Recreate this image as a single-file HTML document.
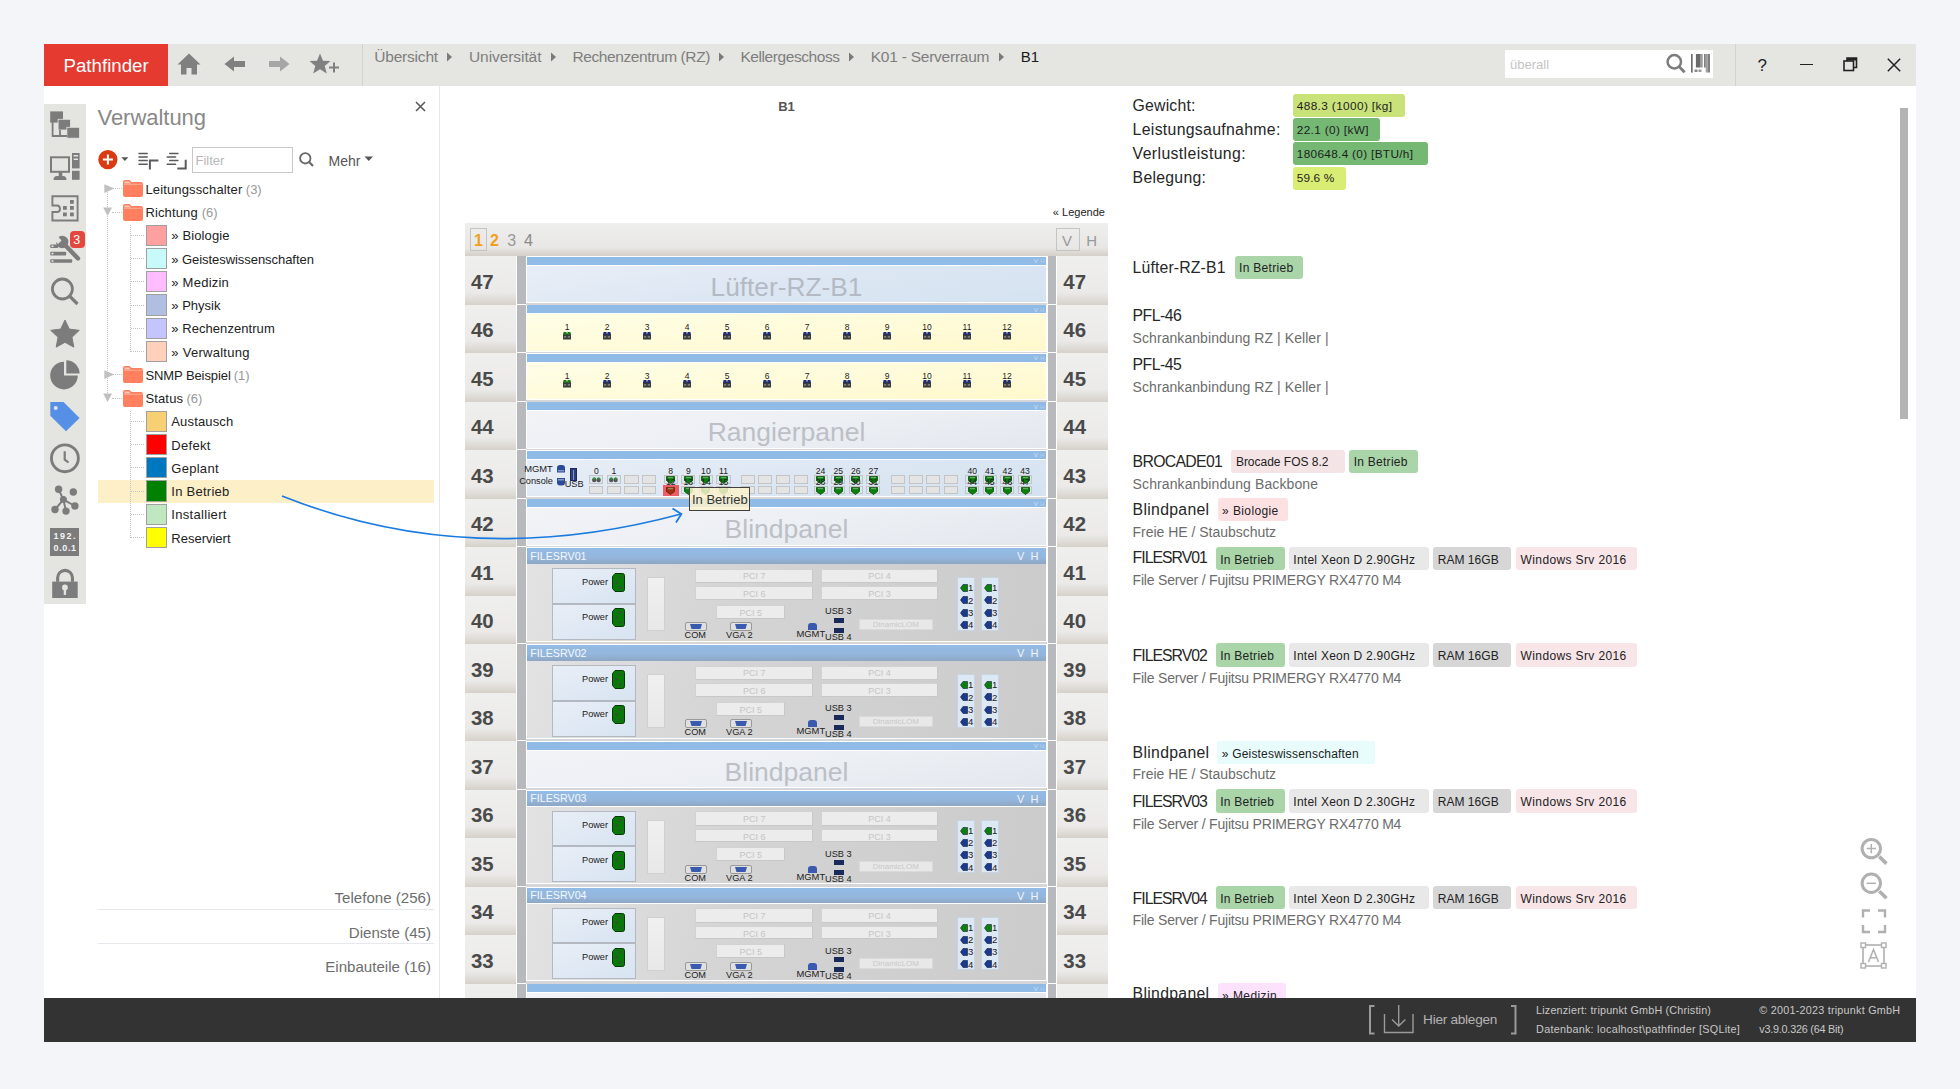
<!DOCTYPE html><html><head><meta charset="utf-8"><style>
*{box-sizing:border-box;margin:0;padding:0}
html,body{width:1960px;height:1089px;overflow:hidden;background:#f4f5f9;font-family:"Liberation Sans", sans-serif;position:relative}
.a{position:absolute}
.t{position:absolute;white-space:pre;line-height:1}
svg{position:absolute;overflow:visible}
</style></head><body>

<div class="a" style="left:44px;top:44px;width:1872px;height:42px;background:#e5e5e1"></div>
<div class="a" style="left:44px;top:86px;width:1872px;height:912px;background:#fff"></div>
<div class="a" style="left:44px;top:44px;width:124px;height:42px;background:#e43a30"></div>
<div class="t" style="left:63.50px;top:56.67px;font-size:18.7px;color:#fff;">Pathfinder</div>
<svg style="left:178px;top:53px" width="24" height="22" viewBox="0 0 24 22"><path d="M11 0.5 L22.5 11.5 L19 11.5 L19 21.5 L13.5 21.5 L13.5 15 L8.5 15 L8.5 21.5 L3 21.5 L3 11.5 L-0.5 11.5 Z" fill="#808080"/></svg>
<svg style="left:224px;top:56px" width="22" height="16" viewBox="0 0 22 16"><path d="M0.5 8 L10 0.5 L10 5 L21 5 L21 11 L10 11 L10 15.5 Z" fill="#808080"/></svg>
<svg style="left:268px;top:56px" width="22" height="16" viewBox="0 0 22 16"><path d="M21.5 8 L12 0.5 L12 5 L1 5 L1 11 L12 11 L12 15.5 Z" fill="#a6a6a6"/></svg>
<svg style="left:309px;top:53px" width="32" height="22" viewBox="0 0 32 22"><path d="M11 0.5 L14 7.8 L21.5 8 L15.7 13 L17.8 20.5 L11 16.2 L4.2 20.5 L6.3 13 L0.5 8 L8 7.8 Z" fill="#808080"/><path d="M20 14.5 H30 M25 9.5 V19.5" stroke="#808080" stroke-width="2"/></svg>
<div class="a" style="left:362px;top:44px;width:1px;height:42px;background:#d2d2ce"></div>
<div class="t" style="left:374.30px;top:49.18px;font-size:15.5px;color:#7e7e7e;letter-spacing:-0.208px;">Übersicht</div>
<svg style="left:447px;top:52px" width="6" height="10" viewBox="0 0 6 10"><path d="M0 0.5 L5 5 L0 9.5 Z" fill="#7a7a7a"/></svg>
<div class="t" style="left:469.00px;top:49.18px;font-size:15.5px;color:#7e7e7e;letter-spacing:-0.074px;">Universität</div>
<svg style="left:551px;top:52px" width="6" height="10" viewBox="0 0 6 10"><path d="M0 0.5 L5 5 L0 9.5 Z" fill="#7a7a7a"/></svg>
<div class="t" style="left:572.50px;top:49.18px;font-size:15.5px;color:#7e7e7e;letter-spacing:-0.401px;">Rechenzentrum (RZ)</div>
<svg style="left:719.4px;top:52px" width="6" height="10" viewBox="0 0 6 10"><path d="M0 0.5 L5 5 L0 9.5 Z" fill="#7a7a7a"/></svg>
<div class="t" style="left:740.40px;top:49.18px;font-size:15.5px;color:#7e7e7e;letter-spacing:-0.422px;">Kellergeschoss</div>
<svg style="left:849px;top:52px" width="6" height="10" viewBox="0 0 6 10"><path d="M0 0.5 L5 5 L0 9.5 Z" fill="#7a7a7a"/></svg>
<div class="t" style="left:870.70px;top:49.18px;font-size:15.5px;color:#7e7e7e;letter-spacing:-0.233px;">K01 - Serverraum</div>
<svg style="left:999px;top:52px" width="6" height="10" viewBox="0 0 6 10"><path d="M0 0.5 L5 5 L0 9.5 Z" fill="#7a7a7a"/></svg>
<div class="t" style="left:1020.70px;top:49.30px;font-size:15px;color:#1a1a1a;">B1</div>
<div class="a" style="left:1505px;top:50px;width:208px;height:28px;background:#fff"></div>
<div class="t" style="left:1510.00px;top:58.00px;font-size:13px;color:#c4c4c4;">überall</div>
<svg style="left:1666px;top:54px" width="22" height="22" viewBox="0 0 22 22"><circle cx="8.3" cy="7.75" r="6.7" fill="none" stroke="#7c7c7c" stroke-width="2.5"/><path d="M13 12.6 L18.6 18.3" stroke="#7c7c7c" stroke-width="2.8"/></svg>
<svg style="left:1690px;top:54px" width="22" height="20" viewBox="0 0 22 20"><rect x="1" y="0" width="1.7" height="18.6" fill="#707070"/><rect x="5.9" y="0" width="4.1" height="13.5" fill="#6a6a6a"/><rect x="10" y="0" width="2.7" height="13.5" fill="#9a9a9a"/><rect x="14.1" y="0" width="1.6" height="13.5" fill="#707070"/><rect x="15.7" y="0" width="1.8" height="18.5" fill="#a0a0a0"/><rect x="17.5" y="0" width="2.5" height="18.5" fill="#808080"/><rect x="4.5" y="15.5" width="3" height="2.5" fill="#888"/><rect x="8.5" y="15.5" width="3" height="2.5" fill="#999"/></svg>
<div class="a" style="left:1735px;top:44px;width:1px;height:42px;background:#d2d2ce"></div>
<div class="t" style="left:1757.50px;top:56.61px;font-size:17px;color:#222;">?</div>
<div class="a" style="left:1800px;top:63.5px;width:13px;height:1.6px;background:#222"></div>
<svg style="left:1843px;top:57px" width="15" height="15" viewBox="0 0 15 15"><rect x="1" y="4" width="9.5" height="9.5" fill="none" stroke="#222" stroke-width="1.6"/><path d="M4 4 V1 H13.5 V10.5 H10.5" fill="none" stroke="#222" stroke-width="1.6"/><rect x="4" y="1" width="9.5" height="2.5" fill="#222"/></svg>
<svg style="left:1887px;top:57.5px" width="14" height="14" viewBox="0 0 14 14"><path d="M0.8 0.8 L13.2 13.2 M13.2 0.8 L0.8 13.2" stroke="#222" stroke-width="1.5"/></svg>
<div class="a" style="left:44px;top:104px;width:42px;height:500px;background:#e4e4e0"></div>
<svg style="left:48px;top:109px" width="34" height="32" viewBox="0 0 34 32"><rect x="2.2" y="2.4" width="12.8" height="11.2" fill="#7c7c7c"/><rect x="10.1" y="10.3" width="12.4" height="10.7" fill="#7c7c7c" stroke="#e4e4e0" stroke-width="0.8"/><rect x="18.9" y="18.3" width="12.7" height="10.9" fill="#7c7c7c" stroke="#e4e4e0" stroke-width="0.8"/><path d="M4.6 13 V27 H19 M12 21 V27" fill="none" stroke="#7c7c7c" stroke-width="1.8"/></svg>
<svg style="left:48px;top:150px" width="34" height="32" viewBox="0 0 34 32"><rect x="3" y="7.3" width="18" height="14.5" fill="none" stroke="#7c7c7c" stroke-width="2"/><rect x="10.7" y="22" width="3.6" height="4" fill="#7c7c7c"/><path d="M5.5 30 Q5.5 26 9 26 H15 Q18.5 26 18.5 30 Z" fill="#7c7c7c"/><rect x="24" y="3" width="7.6" height="15.4" fill="#7c7c7c"/><rect x="24" y="20.8" width="7.6" height="9" fill="#7c7c7c"/><rect x="25.6" y="5" width="4.4" height="1.5" fill="#e4e4e0"/><rect x="25.6" y="8.5" width="4.4" height="1.5" fill="#e4e4e0"/></svg>
<svg style="left:48px;top:192px" width="34" height="32" viewBox="0 0 34 32"><path d="M4.4 4.3 H29.6 V28.5 H4.4 V20 H9 Q12 20 12 17 Q12 13.5 9 13.5 H4.4 Z" fill="none" stroke="#7c7c7c" stroke-width="1.9"/><rect x="22" y="8" width="3.8" height="3.8" fill="#7c7c7c"/><rect x="15" y="14" width="3.8" height="3.8" fill="#7c7c7c"/><rect x="22" y="14" width="3.8" height="3.8" fill="#7c7c7c"/><rect x="15" y="20.5" width="3.8" height="3.8" fill="#7c7c7c"/><rect x="22" y="20.5" width="3.8" height="3.8" fill="#7c7c7c"/></svg>
<svg style="left:48px;top:232px" width="40" height="34" viewBox="0 0 40 34"><rect x="2.2" y="12.5" width="8" height="3.6" rx="1" fill="#7c7c7c"/><rect x="2.2" y="19.8" width="16" height="3.6" rx="1" fill="#7c7c7c"/><rect x="2.2" y="27.2" width="22" height="3.6" rx="1" fill="#7c7c7c"/><rect x="3.5" y="13.5" width="2" height="1.6" fill="#e4e4e0"/><rect x="3.5" y="20.8" width="2" height="1.6" fill="#e4e4e0"/><rect x="3.5" y="28.2" width="2" height="1.6" fill="#e4e4e0"/><path d="M16 12 L30 26.5" stroke="#e4e4e0" stroke-width="7"/><path d="M16 12 L30 26.5" stroke="#7c7c7c" stroke-width="4.4" stroke-linecap="round"/><circle cx="14.2" cy="10" r="6.2" fill="#7c7c7c"/><path d="M8 2 L13.5 8.5 L10 12 L4 6 Z" fill="#e4e4e0"/></svg>
<div class="a" style="left:69.7px;top:231px;width:15.5px;height:16.8px;background:#e5473f;border-radius:4px"></div>
<div class="t" style="left:73.30px;top:233.92px;font-size:12.5px;color:#fff;">3</div>
<svg style="left:48px;top:273px" width="34" height="34" viewBox="0 0 34 34"><circle cx="14.4" cy="16" r="10" fill="none" stroke="#7c7c7c" stroke-width="2.8"/><path d="M21.5 23 L29.5 31" stroke="#7c7c7c" stroke-width="3.2" stroke-linecap="butt"/></svg>
<svg style="left:48px;top:318px" width="34" height="34" viewBox="0 0 34 34"><path d="M17.00 2.00 L21.29 11.09 L31.27 12.36 L23.94 19.26 L25.82 29.14 L17.00 24.30 L8.18 29.14 L10.06 19.26 L2.73 12.36 L12.71 11.09 Z" fill="#7c7c7c" stroke="#7c7c7c" stroke-width="1" stroke-linejoin="round"/></svg>
<svg style="left:48px;top:358px" width="34" height="34" viewBox="0 0 34 34"><path d="M16 3.8 A13.8 13.8 0 1 0 29.8 17.6 H16 Z" fill="#7c7c7c"/><path d="M18.3 2.2 A13.6 13.6 0 0 1 31.6 15.6 H18.3 Z" fill="#7c7c7c"/></svg>
<svg style="left:48px;top:400px" width="34" height="34" viewBox="0 0 34 34"><path d="M2.3 2.1 H15.5 L31.6 17.9 L18 31.3 L2.3 15.8 Z" fill="#5590e6"/><circle cx="7.7" cy="8" r="2" fill="#e4e4e0"/></svg>
<svg style="left:48px;top:441px" width="34" height="34" viewBox="0 0 34 34"><circle cx="16.9" cy="17.3" r="13.45" fill="none" stroke="#7c7c7c" stroke-width="2.9"/><path d="M16.7 10.2 V18.6 L20.5 21.5" fill="none" stroke="#7c7c7c" stroke-width="2.2"/></svg>
<svg style="left:48px;top:478px" width="34" height="38" viewBox="0 0 34 38"><path d="M15.4 21.6 L10.6 11.3 M15.4 21.6 L7 31.5 M15.4 21.6 L18 33.1 M15.4 21.6 L26.9 28" stroke="#7c7c7c" stroke-width="2"/><circle cx="15.4" cy="21.6" r="3.5" fill="#7c7c7c"/><circle cx="10.6" cy="11.3" r="3.7" fill="#7c7c7c"/><circle cx="25.3" cy="14" r="3.7" fill="#7c7c7c"/><circle cx="7" cy="31.5" r="3.7" fill="#7c7c7c"/><circle cx="18" cy="33.1" r="3.7" fill="#7c7c7c"/><circle cx="26.9" cy="28" r="3.7" fill="#7c7c7c"/></svg>
<div class="a" style="left:50.4px;top:527.6px;width:29.1px;height:28.7px;background:#7c7c7c"></div>
<div class="t" style="left:53.60px;top:532.28px;font-size:9px;color:#f4f4f4;letter-spacing:1.492px;font-weight:bold">192.</div>
<div class="t" style="left:53.60px;top:543.58px;font-size:9px;color:#f4f4f4;letter-spacing:0.594px;font-weight:bold">0.0.1</div>
<svg style="left:48px;top:565px" width="34" height="36" viewBox="0 0 34 36"><path d="M9.65 16.8 V12.75 A7.4 7.4 0 0 1 24.45 12.75 V16.8" fill="none" stroke="#7c7c7c" stroke-width="3.1"/><rect x="4.2" y="16.6" width="25.5" height="16.4" fill="#7c7c7c"/><circle cx="16.9" cy="22.5" r="2.9" fill="#e4e4e0"/><rect x="15.7" y="23" width="2.4" height="6.9" fill="#e4e4e0"/></svg>
<div class="a" style="left:439px;top:86px;width:1px;height:912px;background:#e6e6ec"></div>
<div class="t" style="left:97.50px;top:107.08px;font-size:22px;color:#888;letter-spacing:-0.036px;">Verwaltung</div>
<svg style="left:415px;top:101px" width="11" height="11" viewBox="0 0 11 11"><path d="M1 1 L10 10 M10 1 L1 10" stroke="#555" stroke-width="1.5"/></svg>
<svg style="left:97px;top:149px" width="34" height="22" viewBox="0 0 34 22"><circle cx="10.9" cy="10.6" r="9.6" fill="#d93a12"/><path d="M10.9 5.6 V15.6 M5.9 10.6 H15.9" stroke="#fff" stroke-width="2"/><path d="M24.4 8.2 H31.4 L27.9 12 Z" fill="#555"/></svg>
<svg style="left:137px;top:151px" width="24" height="20" viewBox="0 0 24 20"><path d="M2 2.4 H10.2 M2 6 H10.2 M2 9.5 H10.2 M2 13.2 H10.2" stroke="#5a5a5e" stroke-width="1.5" stroke-linecap="round"/><path d="M12.9 18.4 V9.6 H21.4" fill="none" stroke="#5a5a5e" stroke-width="2"/></svg>
<svg style="left:166px;top:151px" width="24" height="20" viewBox="0 0 24 20"><path d="M3.7 2.4 H11.9 M1.2 6 H9.6 M3.7 9.5 H11.9 M1.2 13.2 H9.6" stroke="#5a5a5e" stroke-width="1.5" stroke-linecap="round"/><path d="M11.3 17.4 H19.7 V8.8" fill="none" stroke="#5a5a5e" stroke-width="2"/></svg>
<div class="a" style="left:192px;top:147px;width:101px;height:26px;border:1px solid #c8c8c8;background:#fff"></div>
<div class="t" style="left:195.50px;top:154.00px;font-size:13px;color:#b8b8b8;">Filter</div>
<svg style="left:298px;top:151px" width="18" height="18" viewBox="0 0 18 18"><circle cx="7.3" cy="7.3" r="5.2" fill="none" stroke="#666" stroke-width="1.8"/><path d="M11 11 L15 15" stroke="#666" stroke-width="2.2"/></svg>
<div class="t" style="left:328.50px;top:154.15px;font-size:14px;color:#555;">Mehr</div>
<svg style="left:364px;top:155px" width="10" height="8" viewBox="0 0 10 8"><path d="M0.5 1.5 H9 L4.75 6 Z" fill="#555"/></svg>
<div class="a" style="left:98px;top:480px;width:336px;height:23px;background:#fdefc8"></div>
<div class="a" style="left:107px;top:189.8px;width:1px;height:209.25px;border-left:1px dotted #c4c4c4"></div>
<div class="a" style="left:130px;top:225.05px;width:1px;height:126.5px;border-left:1px dotted #c4c4c4"></div>
<div class="a" style="left:130px;top:411.05px;width:1px;height:126.49999999999994px;border-left:1px dotted #c4c4c4"></div>
<div class="a" style="left:112px;top:188.3px;width:10px;height:1px;border-top:1px dotted #c4c4c4"></div>
<svg style="left:103.5px;top:183.8px" width="11" height="10" viewBox="0 0 11 10"><path d="M0.3 0.3 L10.3 4.6 L0.3 8.9 Z" fill="#c0c0c0"/></svg>
<svg style="left:123px;top:180.4px" width="20" height="17" viewBox="0 0 20 17"><path d="M0 2 Q0 0 2 0 H6.5 L8.5 2 H18 Q20 2 20 4 V15 Q20 17 18 17 H2 Q0 17 0 15 Z" fill="#ff7f5f"/><path d="M1.6 1.5 H6.2 L7.6 3.4 H1.6 Z" fill="#ffc8b8"/><rect x="1" y="3.8" width="18" height="1" fill="#ffb09a"/></svg>
<div class="t" style="left:145.40px;top:182.80px;font-size:13px;color:#222;letter-spacing:0.146px;">Leitungsschalter</div>
<div class="t" style="left:245.80px;top:182.80px;font-size:13px;color:#999;">(3)</div>
<div class="a" style="left:112px;top:211.55px;width:10px;height:1px;border-top:1px dotted #c4c4c4"></div>
<svg style="left:103px;top:207.05px" width="10" height="10" viewBox="0 0 10 10"><path d="M0.2 0.5 H9 L4.6 9 Z" fill="#c0c0c0"/></svg>
<svg style="left:123px;top:203.65px" width="20" height="17" viewBox="0 0 20 17"><path d="M0 2 Q0 0 2 0 H6.5 L8.5 2 H18 Q20 2 20 4 V15 Q20 17 18 17 H2 Q0 17 0 15 Z" fill="#ff7f5f"/><path d="M1.6 1.5 H6.2 L7.6 3.4 H1.6 Z" fill="#ffc8b8"/><rect x="1" y="3.8" width="18" height="1" fill="#ffb09a"/></svg>
<div class="t" style="left:145.40px;top:206.05px;font-size:13px;color:#222;letter-spacing:0.136px;">Richtung</div>
<div class="t" style="left:201.70px;top:206.05px;font-size:13px;color:#999;">(6)</div>
<div class="a" style="left:131px;top:234.8px;width:13px;height:1px;border-top:1px dotted #c4c4c4"></div>
<div class="a" style="left:146px;top:224.5px;width:21px;height:21.4px;background:#ffa0a0;border:1px solid #a0a0a0"></div>
<div class="t" style="left:171.30px;top:229.30px;font-size:13px;color:#222;letter-spacing:0.129px;">» Biologie</div>
<div class="a" style="left:131px;top:258.05px;width:13px;height:1px;border-top:1px dotted #c4c4c4"></div>
<div class="a" style="left:146px;top:247.75px;width:21px;height:21.4px;background:#c8fafa;border:1px solid #a0a0a0"></div>
<div class="t" style="left:171.30px;top:252.55px;font-size:13px;color:#222;letter-spacing:-0.056px;">» Geisteswissenschaften</div>
<div class="a" style="left:131px;top:281.3px;width:13px;height:1px;border-top:1px dotted #c4c4c4"></div>
<div class="a" style="left:146px;top:271.0px;width:21px;height:21.4px;background:#ffbcff;border:1px solid #a0a0a0"></div>
<div class="t" style="left:171.30px;top:275.80px;font-size:13px;color:#222;letter-spacing:0.240px;">» Medizin</div>
<div class="a" style="left:131px;top:304.55px;width:13px;height:1px;border-top:1px dotted #c4c4c4"></div>
<div class="a" style="left:146px;top:294.25px;width:21px;height:21.4px;background:#b0bee0;border:1px solid #a0a0a0"></div>
<div class="t" style="left:171.30px;top:299.05px;font-size:13px;color:#222;letter-spacing:0.007px;">» Physik</div>
<div class="a" style="left:131px;top:327.8px;width:13px;height:1px;border-top:1px dotted #c4c4c4"></div>
<div class="a" style="left:146px;top:317.5px;width:21px;height:21.4px;background:#c4c4ff;border:1px solid #a0a0a0"></div>
<div class="t" style="left:171.30px;top:322.30px;font-size:13px;color:#222;letter-spacing:0.058px;">» Rechenzentrum</div>
<div class="a" style="left:131px;top:351.05px;width:13px;height:1px;border-top:1px dotted #c4c4c4"></div>
<div class="a" style="left:146px;top:340.75px;width:21px;height:21.4px;background:#ffd0bc;border:1px solid #a0a0a0"></div>
<div class="t" style="left:171.30px;top:345.55px;font-size:13px;color:#222;letter-spacing:0.269px;">» Verwaltung</div>
<div class="a" style="left:112px;top:374.3px;width:10px;height:1px;border-top:1px dotted #c4c4c4"></div>
<svg style="left:103.5px;top:369.8px" width="11" height="10" viewBox="0 0 11 10"><path d="M0.3 0.3 L10.3 4.6 L0.3 8.9 Z" fill="#c0c0c0"/></svg>
<svg style="left:123px;top:366.40000000000003px" width="20" height="17" viewBox="0 0 20 17"><path d="M0 2 Q0 0 2 0 H6.5 L8.5 2 H18 Q20 2 20 4 V15 Q20 17 18 17 H2 Q0 17 0 15 Z" fill="#ff7f5f"/><path d="M1.6 1.5 H6.2 L7.6 3.4 H1.6 Z" fill="#ffc8b8"/><rect x="1" y="3.8" width="18" height="1" fill="#ffb09a"/></svg>
<div class="t" style="left:145.40px;top:368.80px;font-size:13px;color:#222;letter-spacing:-0.090px;">SNMP Beispiel</div>
<div class="t" style="left:233.70px;top:368.80px;font-size:13px;color:#999;">(1)</div>
<div class="a" style="left:112px;top:397.55px;width:10px;height:1px;border-top:1px dotted #c4c4c4"></div>
<svg style="left:103px;top:393.05px" width="10" height="10" viewBox="0 0 10 10"><path d="M0.2 0.5 H9 L4.6 9 Z" fill="#c0c0c0"/></svg>
<svg style="left:123px;top:389.65000000000003px" width="20" height="17" viewBox="0 0 20 17"><path d="M0 2 Q0 0 2 0 H6.5 L8.5 2 H18 Q20 2 20 4 V15 Q20 17 18 17 H2 Q0 17 0 15 Z" fill="#ff7f5f"/><path d="M1.6 1.5 H6.2 L7.6 3.4 H1.6 Z" fill="#ffc8b8"/><rect x="1" y="3.8" width="18" height="1" fill="#ffb09a"/></svg>
<div class="t" style="left:145.40px;top:392.05px;font-size:13px;color:#222;letter-spacing:0.157px;">Status</div>
<div class="t" style="left:186.50px;top:392.05px;font-size:13px;color:#999;">(6)</div>
<div class="a" style="left:131px;top:420.8px;width:13px;height:1px;border-top:1px dotted #c4c4c4"></div>
<div class="a" style="left:146px;top:410.5px;width:21px;height:21.4px;background:#f8d074;border:1px solid #a0a0a0"></div>
<div class="t" style="left:171.30px;top:415.30px;font-size:13px;color:#222;letter-spacing:0.144px;">Austausch</div>
<div class="a" style="left:131px;top:444.05px;width:13px;height:1px;border-top:1px dotted #c4c4c4"></div>
<div class="a" style="left:146px;top:433.75px;width:21px;height:21.4px;background:#ff0000;border:1px solid #a0a0a0"></div>
<div class="t" style="left:171.30px;top:438.55px;font-size:13px;color:#222;letter-spacing:0.320px;">Defekt</div>
<div class="a" style="left:131px;top:467.3px;width:13px;height:1px;border-top:1px dotted #c4c4c4"></div>
<div class="a" style="left:146px;top:457.0px;width:21px;height:21.4px;background:#0078c0;border:1px solid #a0a0a0"></div>
<div class="t" style="left:171.30px;top:461.80px;font-size:13px;color:#222;letter-spacing:0.279px;">Geplant</div>
<div class="a" style="left:131px;top:490.55px;width:13px;height:1px;border-top:1px dotted #c4c4c4"></div>
<div class="a" style="left:146px;top:480.25px;width:21px;height:21.4px;background:#008000;border:1px solid #a0a0a0"></div>
<div class="t" style="left:171.30px;top:485.05px;font-size:13px;color:#222;letter-spacing:0.264px;">In Betrieb</div>
<div class="a" style="left:131px;top:513.8px;width:13px;height:1px;border-top:1px dotted #c4c4c4"></div>
<div class="a" style="left:146px;top:503.49999999999994px;width:21px;height:21.4px;background:#c0e8c0;border:1px solid #a0a0a0"></div>
<div class="t" style="left:171.30px;top:508.30px;font-size:13px;color:#222;letter-spacing:0.306px;">Installiert</div>
<div class="a" style="left:131px;top:537.05px;width:13px;height:1px;border-top:1px dotted #c4c4c4"></div>
<div class="a" style="left:146px;top:526.75px;width:21px;height:21.4px;background:#ffff00;border:1px solid #a0a0a0"></div>
<div class="t" style="left:171.30px;top:531.55px;font-size:13px;color:#222;letter-spacing:-0.005px;">Reserviert</div>
<div class="t" style="right:1529.00px;top:890.22px;font-size:15.1px;color:#6e6e6e;">Telefone (256)</div>
<div class="a" style="left:98px;top:908.5px;width:336px;height:1.5px;background:#e6e8ee"></div>
<div class="t" style="right:1529.00px;top:924.72px;font-size:15.1px;color:#6e6e6e;">Dienste (45)</div>
<div class="a" style="left:98px;top:942.5px;width:336px;height:1.5px;background:#e6e8ee"></div>
<div class="t" style="right:1529.00px;top:959.02px;font-size:15.1px;color:#6e6e6e;">Einbauteile (16)</div>
<div class="t" style="left:286.50px;width:1000px;text-align:center;top:100.00px;font-size:13px;color:#555;font-weight:bold">B1</div>
<div class="t" style="right:855.00px;top:207.49px;font-size:11px;color:#222;letter-spacing:0.022px;">« Legende</div>
<div class="a" style="left:465px;top:222.5px;width:643px;height:33.5px;background:linear-gradient(#eeeeed 0%,#e8e7e5 76%,#dfdcd7 86%,#d6d1ca 97%)"></div>
<div class="a" style="left:470.4px;top:228px;width:16.2px;height:22.7px;border:1px solid #c4c4c4"></div>
<div class="t" style="left:474.00px;top:232.76px;font-size:16px;color:#f0a01c;font-weight:bold">1</div>
<div class="t" style="left:490.00px;top:232.76px;font-size:16px;color:#f0a01c;font-weight:bold">2</div>
<div class="t" style="left:507.30px;top:232.76px;font-size:16px;color:#999;">3</div>
<div class="t" style="left:524.00px;top:232.76px;font-size:16px;color:#888;">4</div>
<div class="a" style="left:1056px;top:228px;width:23.6px;height:22.5px;border:1px solid #c4c4c4"></div>
<div class="t" style="left:1062.00px;top:233.30px;font-size:15px;color:#999;letter-spacing:0.284px;">V</div>
<div class="t" style="left:1086.30px;top:233.30px;font-size:15px;color:#999;letter-spacing:-0.744px;">H</div>
<div class="a" style="left:526px;top:256px;width:521px;height:742px;background:#d6d6d8"></div>
<div class="a" style="left:465px;top:256.0px;width:51px;height:48.5px;background:linear-gradient(#efefee 0%,#ebeae9 74%,#e0ddd8 88%,#d5d0c9 100%)"></div>
<div class="a" style="left:1057px;top:256.0px;width:51px;height:48.5px;background:linear-gradient(#efefee 0%,#ebeae9 74%,#e0ddd8 88%,#d5d0c9 100%)"></div>
<div class="t" style="left:471.00px;top:271.73px;font-size:20.4px;color:#4a4a4a;font-weight:bold">47</div>
<div class="t" style="left:1063.30px;top:271.73px;font-size:20.4px;color:#4a4a4a;font-weight:bold">47</div>
<div class="a" style="left:465px;top:304.5px;width:51px;height:48.5px;background:linear-gradient(#efefee 0%,#ebeae9 74%,#e0ddd8 88%,#d5d0c9 100%)"></div>
<div class="a" style="left:1057px;top:304.5px;width:51px;height:48.5px;background:linear-gradient(#efefee 0%,#ebeae9 74%,#e0ddd8 88%,#d5d0c9 100%)"></div>
<div class="t" style="left:471.00px;top:320.23px;font-size:20.4px;color:#4a4a4a;font-weight:bold">46</div>
<div class="t" style="left:1063.30px;top:320.23px;font-size:20.4px;color:#4a4a4a;font-weight:bold">46</div>
<div class="a" style="left:465px;top:353.0px;width:51px;height:48.5px;background:linear-gradient(#efefee 0%,#ebeae9 74%,#e0ddd8 88%,#d5d0c9 100%)"></div>
<div class="a" style="left:1057px;top:353.0px;width:51px;height:48.5px;background:linear-gradient(#efefee 0%,#ebeae9 74%,#e0ddd8 88%,#d5d0c9 100%)"></div>
<div class="t" style="left:471.00px;top:368.73px;font-size:20.4px;color:#4a4a4a;font-weight:bold">45</div>
<div class="t" style="left:1063.30px;top:368.73px;font-size:20.4px;color:#4a4a4a;font-weight:bold">45</div>
<div class="a" style="left:465px;top:401.5px;width:51px;height:48.5px;background:linear-gradient(#efefee 0%,#ebeae9 74%,#e0ddd8 88%,#d5d0c9 100%)"></div>
<div class="a" style="left:1057px;top:401.5px;width:51px;height:48.5px;background:linear-gradient(#efefee 0%,#ebeae9 74%,#e0ddd8 88%,#d5d0c9 100%)"></div>
<div class="t" style="left:471.00px;top:417.23px;font-size:20.4px;color:#4a4a4a;font-weight:bold">44</div>
<div class="t" style="left:1063.30px;top:417.23px;font-size:20.4px;color:#4a4a4a;font-weight:bold">44</div>
<div class="a" style="left:465px;top:450.0px;width:51px;height:48.5px;background:linear-gradient(#efefee 0%,#ebeae9 74%,#e0ddd8 88%,#d5d0c9 100%)"></div>
<div class="a" style="left:1057px;top:450.0px;width:51px;height:48.5px;background:linear-gradient(#efefee 0%,#ebeae9 74%,#e0ddd8 88%,#d5d0c9 100%)"></div>
<div class="t" style="left:471.00px;top:465.73px;font-size:20.4px;color:#4a4a4a;font-weight:bold">43</div>
<div class="t" style="left:1063.30px;top:465.73px;font-size:20.4px;color:#4a4a4a;font-weight:bold">43</div>
<div class="a" style="left:465px;top:498.5px;width:51px;height:48.5px;background:linear-gradient(#efefee 0%,#ebeae9 74%,#e0ddd8 88%,#d5d0c9 100%)"></div>
<div class="a" style="left:1057px;top:498.5px;width:51px;height:48.5px;background:linear-gradient(#efefee 0%,#ebeae9 74%,#e0ddd8 88%,#d5d0c9 100%)"></div>
<div class="t" style="left:471.00px;top:514.23px;font-size:20.4px;color:#4a4a4a;font-weight:bold">42</div>
<div class="t" style="left:1063.30px;top:514.23px;font-size:20.4px;color:#4a4a4a;font-weight:bold">42</div>
<div class="a" style="left:465px;top:547.0px;width:51px;height:48.5px;background:linear-gradient(#efefee 0%,#ebeae9 74%,#e0ddd8 88%,#d5d0c9 100%)"></div>
<div class="a" style="left:1057px;top:547.0px;width:51px;height:48.5px;background:linear-gradient(#efefee 0%,#ebeae9 74%,#e0ddd8 88%,#d5d0c9 100%)"></div>
<div class="t" style="left:471.00px;top:562.73px;font-size:20.4px;color:#4a4a4a;font-weight:bold">41</div>
<div class="t" style="left:1063.30px;top:562.73px;font-size:20.4px;color:#4a4a4a;font-weight:bold">41</div>
<div class="a" style="left:465px;top:595.5px;width:51px;height:48.5px;background:linear-gradient(#efefee 0%,#ebeae9 74%,#e0ddd8 88%,#d5d0c9 100%)"></div>
<div class="a" style="left:1057px;top:595.5px;width:51px;height:48.5px;background:linear-gradient(#efefee 0%,#ebeae9 74%,#e0ddd8 88%,#d5d0c9 100%)"></div>
<div class="t" style="left:471.00px;top:611.23px;font-size:20.4px;color:#4a4a4a;font-weight:bold">40</div>
<div class="t" style="left:1063.30px;top:611.23px;font-size:20.4px;color:#4a4a4a;font-weight:bold">40</div>
<div class="a" style="left:465px;top:644.0px;width:51px;height:48.5px;background:linear-gradient(#efefee 0%,#ebeae9 74%,#e0ddd8 88%,#d5d0c9 100%)"></div>
<div class="a" style="left:1057px;top:644.0px;width:51px;height:48.5px;background:linear-gradient(#efefee 0%,#ebeae9 74%,#e0ddd8 88%,#d5d0c9 100%)"></div>
<div class="t" style="left:471.00px;top:659.73px;font-size:20.4px;color:#4a4a4a;font-weight:bold">39</div>
<div class="t" style="left:1063.30px;top:659.73px;font-size:20.4px;color:#4a4a4a;font-weight:bold">39</div>
<div class="a" style="left:465px;top:692.5px;width:51px;height:48.5px;background:linear-gradient(#efefee 0%,#ebeae9 74%,#e0ddd8 88%,#d5d0c9 100%)"></div>
<div class="a" style="left:1057px;top:692.5px;width:51px;height:48.5px;background:linear-gradient(#efefee 0%,#ebeae9 74%,#e0ddd8 88%,#d5d0c9 100%)"></div>
<div class="t" style="left:471.00px;top:708.23px;font-size:20.4px;color:#4a4a4a;font-weight:bold">38</div>
<div class="t" style="left:1063.30px;top:708.23px;font-size:20.4px;color:#4a4a4a;font-weight:bold">38</div>
<div class="a" style="left:465px;top:741.0px;width:51px;height:48.5px;background:linear-gradient(#efefee 0%,#ebeae9 74%,#e0ddd8 88%,#d5d0c9 100%)"></div>
<div class="a" style="left:1057px;top:741.0px;width:51px;height:48.5px;background:linear-gradient(#efefee 0%,#ebeae9 74%,#e0ddd8 88%,#d5d0c9 100%)"></div>
<div class="t" style="left:471.00px;top:756.73px;font-size:20.4px;color:#4a4a4a;font-weight:bold">37</div>
<div class="t" style="left:1063.30px;top:756.73px;font-size:20.4px;color:#4a4a4a;font-weight:bold">37</div>
<div class="a" style="left:465px;top:789.5px;width:51px;height:48.5px;background:linear-gradient(#efefee 0%,#ebeae9 74%,#e0ddd8 88%,#d5d0c9 100%)"></div>
<div class="a" style="left:1057px;top:789.5px;width:51px;height:48.5px;background:linear-gradient(#efefee 0%,#ebeae9 74%,#e0ddd8 88%,#d5d0c9 100%)"></div>
<div class="t" style="left:471.00px;top:805.23px;font-size:20.4px;color:#4a4a4a;font-weight:bold">36</div>
<div class="t" style="left:1063.30px;top:805.23px;font-size:20.4px;color:#4a4a4a;font-weight:bold">36</div>
<div class="a" style="left:465px;top:838.0px;width:51px;height:48.5px;background:linear-gradient(#efefee 0%,#ebeae9 74%,#e0ddd8 88%,#d5d0c9 100%)"></div>
<div class="a" style="left:1057px;top:838.0px;width:51px;height:48.5px;background:linear-gradient(#efefee 0%,#ebeae9 74%,#e0ddd8 88%,#d5d0c9 100%)"></div>
<div class="t" style="left:471.00px;top:853.73px;font-size:20.4px;color:#4a4a4a;font-weight:bold">35</div>
<div class="t" style="left:1063.30px;top:853.73px;font-size:20.4px;color:#4a4a4a;font-weight:bold">35</div>
<div class="a" style="left:465px;top:886.5px;width:51px;height:48.5px;background:linear-gradient(#efefee 0%,#ebeae9 74%,#e0ddd8 88%,#d5d0c9 100%)"></div>
<div class="a" style="left:1057px;top:886.5px;width:51px;height:48.5px;background:linear-gradient(#efefee 0%,#ebeae9 74%,#e0ddd8 88%,#d5d0c9 100%)"></div>
<div class="t" style="left:471.00px;top:902.23px;font-size:20.4px;color:#4a4a4a;font-weight:bold">34</div>
<div class="t" style="left:1063.30px;top:902.23px;font-size:20.4px;color:#4a4a4a;font-weight:bold">34</div>
<div class="a" style="left:465px;top:935.0px;width:51px;height:48.5px;background:linear-gradient(#efefee 0%,#ebeae9 74%,#e0ddd8 88%,#d5d0c9 100%)"></div>
<div class="a" style="left:1057px;top:935.0px;width:51px;height:48.5px;background:linear-gradient(#efefee 0%,#ebeae9 74%,#e0ddd8 88%,#d5d0c9 100%)"></div>
<div class="t" style="left:471.00px;top:950.73px;font-size:20.4px;color:#4a4a4a;font-weight:bold">33</div>
<div class="t" style="left:1063.30px;top:950.73px;font-size:20.4px;color:#4a4a4a;font-weight:bold">33</div>
<div class="a" style="left:465px;top:983.5px;width:51px;height:48.5px;background:linear-gradient(#efefee 0%,#ebeae9 74%,#e0ddd8 88%,#d5d0c9 100%)"></div>
<div class="a" style="left:1057px;top:983.5px;width:51px;height:48.5px;background:linear-gradient(#efefee 0%,#ebeae9 74%,#e0ddd8 88%,#d5d0c9 100%)"></div>
<div class="t" style="left:471.00px;top:999.23px;font-size:20.4px;color:#4a4a4a;font-weight:bold">32</div>
<div class="t" style="left:1063.30px;top:999.23px;font-size:20.4px;color:#4a4a4a;font-weight:bold">32</div>
<div class="a" style="left:517px;top:256.0px;width:9px;height:47.5px;background:#b8b9bd"></div>
<div class="a" style="left:1048px;top:256.0px;width:8px;height:47.5px;background:#b8b9bd"></div>
<div class="a" style="left:517px;top:304.5px;width:9px;height:47.5px;background:#b8b9bd"></div>
<div class="a" style="left:1048px;top:304.5px;width:8px;height:47.5px;background:#b8b9bd"></div>
<div class="a" style="left:517px;top:353.0px;width:9px;height:47.5px;background:#b8b9bd"></div>
<div class="a" style="left:1048px;top:353.0px;width:8px;height:47.5px;background:#b8b9bd"></div>
<div class="a" style="left:517px;top:401.5px;width:9px;height:47.5px;background:#b8b9bd"></div>
<div class="a" style="left:1048px;top:401.5px;width:8px;height:47.5px;background:#b8b9bd"></div>
<div class="a" style="left:517px;top:450.0px;width:9px;height:47.5px;background:#b8b9bd"></div>
<div class="a" style="left:1048px;top:450.0px;width:8px;height:47.5px;background:#b8b9bd"></div>
<div class="a" style="left:517px;top:498.5px;width:9px;height:47.5px;background:#b8b9bd"></div>
<div class="a" style="left:1048px;top:498.5px;width:8px;height:47.5px;background:#b8b9bd"></div>
<div class="a" style="left:517px;top:547.0px;width:9px;height:96.0px;background:#b8b9bd"></div>
<div class="a" style="left:1048px;top:547.0px;width:8px;height:96.0px;background:#b8b9bd"></div>
<div class="a" style="left:517px;top:644.0px;width:9px;height:96.0px;background:#b8b9bd"></div>
<div class="a" style="left:1048px;top:644.0px;width:8px;height:96.0px;background:#b8b9bd"></div>
<div class="a" style="left:517px;top:741.0px;width:9px;height:47.5px;background:#b8b9bd"></div>
<div class="a" style="left:1048px;top:741.0px;width:8px;height:47.5px;background:#b8b9bd"></div>
<div class="a" style="left:517px;top:789.5px;width:9px;height:96.0px;background:#b8b9bd"></div>
<div class="a" style="left:1048px;top:789.5px;width:8px;height:96.0px;background:#b8b9bd"></div>
<div class="a" style="left:517px;top:886.5px;width:9px;height:96.0px;background:#b8b9bd"></div>
<div class="a" style="left:1048px;top:886.5px;width:8px;height:96.0px;background:#b8b9bd"></div>
<div class="a" style="left:517px;top:983.5px;width:9px;height:14.5px;background:#b8b9bd"></div>
<div class="a" style="left:1048px;top:983.5px;width:8px;height:14.5px;background:#b8b9bd"></div>
<div class="a" style="left:526px;top:256.0px;width:521px;height:47.0px;background:#fff"></div>
<div class="a" style="left:527px;top:256.5px;width:519px;height:8px;background:#91bbe7"></div>
<div class="a" style="left:527px;top:265.5px;width:519px;height:36.5px;background:linear-gradient(170deg,#e8eef7 0%,#dde7f3 50%,#d4e2f1 100%)"></div>
<div class="t" style="left:1034.00px;top:258.42px;font-size:6px;color:#d0e0f4;">V</div>
<div class="t" style="left:1040.00px;top:258.42px;font-size:6px;color:#b8cce6;">H</div>
<div class="t" style="left:286.50px;width:1000px;text-align:center;top:273.74px;font-size:26.3px;color:#b4bac4;">Lüfter-RZ-B1</div>
<div class="a" style="left:526px;top:304.5px;width:521px;height:47.0px;background:#fff"></div>
<div class="a" style="left:527px;top:305.0px;width:519px;height:8px;background:#91bbe7"></div>
<div class="a" style="left:527px;top:314.0px;width:519px;height:36.5px;background:linear-gradient(175deg,#fffee6 0%,#fffbd8 60%,#fff8cc 100%)"></div>
<div class="t" style="left:1034.00px;top:306.92px;font-size:6px;color:#d0e0f4;">V</div>
<div class="t" style="left:1040.00px;top:306.92px;font-size:6px;color:#b8cce6;">H</div>
<div class="t" style="left:67.00px;width:1000px;text-align:center;top:323.30px;font-size:8.5px;color:#222;">1</div>
<svg style="left:563px;top:331.7px" width="8" height="7.5" viewBox="0 0 8 7.5"><rect x="0" y="1.5" width="8" height="6" fill="#3a3a3a"/><rect x="0.5" y="0" width="3" height="3" fill="#1a7a1a"/><rect x="4.5" y="0" width="3" height="3" fill="#1a7a1a"/><rect x="1" y="4.2" width="2.2" height="1.4" fill="#8a8a8a"/><rect x="4.8" y="4.2" width="2.2" height="1.4" fill="#8a8a8a"/></svg>
<div class="t" style="left:107.00px;width:1000px;text-align:center;top:323.30px;font-size:8.5px;color:#222;">2</div>
<svg style="left:603px;top:331.7px" width="8" height="7.5" viewBox="0 0 8 7.5"><rect x="0" y="1.5" width="8" height="6" fill="#3a3a3a"/><rect x="0.5" y="0" width="3" height="3" fill="#1e2e78"/><rect x="4.5" y="0" width="3" height="3" fill="#1e2e78"/><rect x="1" y="4.2" width="2.2" height="1.4" fill="#8a8a8a"/><rect x="4.8" y="4.2" width="2.2" height="1.4" fill="#8a8a8a"/></svg>
<div class="t" style="left:147.00px;width:1000px;text-align:center;top:323.30px;font-size:8.5px;color:#222;">3</div>
<svg style="left:643px;top:331.7px" width="8" height="7.5" viewBox="0 0 8 7.5"><rect x="0" y="1.5" width="8" height="6" fill="#3a3a3a"/><rect x="0.5" y="0" width="3" height="3" fill="#1e2e78"/><rect x="4.5" y="0" width="3" height="3" fill="#1e2e78"/><rect x="1" y="4.2" width="2.2" height="1.4" fill="#8a8a8a"/><rect x="4.8" y="4.2" width="2.2" height="1.4" fill="#8a8a8a"/></svg>
<div class="t" style="left:187.00px;width:1000px;text-align:center;top:323.30px;font-size:8.5px;color:#222;">4</div>
<svg style="left:683px;top:331.7px" width="8" height="7.5" viewBox="0 0 8 7.5"><rect x="0" y="1.5" width="8" height="6" fill="#3a3a3a"/><rect x="0.5" y="0" width="3" height="3" fill="#1e2e78"/><rect x="4.5" y="0" width="3" height="3" fill="#1e2e78"/><rect x="1" y="4.2" width="2.2" height="1.4" fill="#8a8a8a"/><rect x="4.8" y="4.2" width="2.2" height="1.4" fill="#8a8a8a"/></svg>
<div class="t" style="left:227.00px;width:1000px;text-align:center;top:323.30px;font-size:8.5px;color:#222;">5</div>
<svg style="left:723px;top:331.7px" width="8" height="7.5" viewBox="0 0 8 7.5"><rect x="0" y="1.5" width="8" height="6" fill="#3a3a3a"/><rect x="0.5" y="0" width="3" height="3" fill="#1e2e78"/><rect x="4.5" y="0" width="3" height="3" fill="#1e2e78"/><rect x="1" y="4.2" width="2.2" height="1.4" fill="#8a8a8a"/><rect x="4.8" y="4.2" width="2.2" height="1.4" fill="#8a8a8a"/></svg>
<div class="t" style="left:267.00px;width:1000px;text-align:center;top:323.30px;font-size:8.5px;color:#222;">6</div>
<svg style="left:763px;top:331.7px" width="8" height="7.5" viewBox="0 0 8 7.5"><rect x="0" y="1.5" width="8" height="6" fill="#3a3a3a"/><rect x="0.5" y="0" width="3" height="3" fill="#1e2e78"/><rect x="4.5" y="0" width="3" height="3" fill="#1e2e78"/><rect x="1" y="4.2" width="2.2" height="1.4" fill="#8a8a8a"/><rect x="4.8" y="4.2" width="2.2" height="1.4" fill="#8a8a8a"/></svg>
<div class="t" style="left:307.00px;width:1000px;text-align:center;top:323.30px;font-size:8.5px;color:#222;">7</div>
<svg style="left:803px;top:331.7px" width="8" height="7.5" viewBox="0 0 8 7.5"><rect x="0" y="1.5" width="8" height="6" fill="#3a3a3a"/><rect x="0.5" y="0" width="3" height="3" fill="#1e2e78"/><rect x="4.5" y="0" width="3" height="3" fill="#1e2e78"/><rect x="1" y="4.2" width="2.2" height="1.4" fill="#8a8a8a"/><rect x="4.8" y="4.2" width="2.2" height="1.4" fill="#8a8a8a"/></svg>
<div class="t" style="left:347.00px;width:1000px;text-align:center;top:323.30px;font-size:8.5px;color:#222;">8</div>
<svg style="left:843px;top:331.7px" width="8" height="7.5" viewBox="0 0 8 7.5"><rect x="0" y="1.5" width="8" height="6" fill="#3a3a3a"/><rect x="0.5" y="0" width="3" height="3" fill="#1e2e78"/><rect x="4.5" y="0" width="3" height="3" fill="#1e2e78"/><rect x="1" y="4.2" width="2.2" height="1.4" fill="#8a8a8a"/><rect x="4.8" y="4.2" width="2.2" height="1.4" fill="#8a8a8a"/></svg>
<div class="t" style="left:387.00px;width:1000px;text-align:center;top:323.30px;font-size:8.5px;color:#222;">9</div>
<svg style="left:883px;top:331.7px" width="8" height="7.5" viewBox="0 0 8 7.5"><rect x="0" y="1.5" width="8" height="6" fill="#3a3a3a"/><rect x="0.5" y="0" width="3" height="3" fill="#1e2e78"/><rect x="4.5" y="0" width="3" height="3" fill="#1e2e78"/><rect x="1" y="4.2" width="2.2" height="1.4" fill="#8a8a8a"/><rect x="4.8" y="4.2" width="2.2" height="1.4" fill="#8a8a8a"/></svg>
<div class="t" style="left:427.00px;width:1000px;text-align:center;top:323.30px;font-size:8.5px;color:#222;">10</div>
<svg style="left:923px;top:331.7px" width="8" height="7.5" viewBox="0 0 8 7.5"><rect x="0" y="1.5" width="8" height="6" fill="#3a3a3a"/><rect x="0.5" y="0" width="3" height="3" fill="#1e2e78"/><rect x="4.5" y="0" width="3" height="3" fill="#1e2e78"/><rect x="1" y="4.2" width="2.2" height="1.4" fill="#8a8a8a"/><rect x="4.8" y="4.2" width="2.2" height="1.4" fill="#8a8a8a"/></svg>
<div class="t" style="left:467.00px;width:1000px;text-align:center;top:323.30px;font-size:8.5px;color:#222;">11</div>
<svg style="left:963px;top:331.7px" width="8" height="7.5" viewBox="0 0 8 7.5"><rect x="0" y="1.5" width="8" height="6" fill="#3a3a3a"/><rect x="0.5" y="0" width="3" height="3" fill="#1e2e78"/><rect x="4.5" y="0" width="3" height="3" fill="#1e2e78"/><rect x="1" y="4.2" width="2.2" height="1.4" fill="#8a8a8a"/><rect x="4.8" y="4.2" width="2.2" height="1.4" fill="#8a8a8a"/></svg>
<div class="t" style="left:507.00px;width:1000px;text-align:center;top:323.30px;font-size:8.5px;color:#222;">12</div>
<svg style="left:1003px;top:331.7px" width="8" height="7.5" viewBox="0 0 8 7.5"><rect x="0" y="1.5" width="8" height="6" fill="#3a3a3a"/><rect x="0.5" y="0" width="3" height="3" fill="#1e2e78"/><rect x="4.5" y="0" width="3" height="3" fill="#1e2e78"/><rect x="1" y="4.2" width="2.2" height="1.4" fill="#8a8a8a"/><rect x="4.8" y="4.2" width="2.2" height="1.4" fill="#8a8a8a"/></svg>
<div class="a" style="left:526px;top:353.0px;width:521px;height:47.0px;background:#fff"></div>
<div class="a" style="left:527px;top:353.5px;width:519px;height:8px;background:#91bbe7"></div>
<div class="a" style="left:527px;top:362.5px;width:519px;height:36.5px;background:linear-gradient(175deg,#fffee6 0%,#fffbd8 60%,#fff8cc 100%)"></div>
<div class="t" style="left:1034.00px;top:355.42px;font-size:6px;color:#d0e0f4;">V</div>
<div class="t" style="left:1040.00px;top:355.42px;font-size:6px;color:#b8cce6;">H</div>
<div class="t" style="left:67.00px;width:1000px;text-align:center;top:371.80px;font-size:8.5px;color:#222;">1</div>
<svg style="left:563px;top:380.2px" width="8" height="7.5" viewBox="0 0 8 7.5"><rect x="0" y="1.5" width="8" height="6" fill="#3a3a3a"/><rect x="0.5" y="0" width="3" height="3" fill="#1a7a1a"/><rect x="4.5" y="0" width="3" height="3" fill="#1a7a1a"/><rect x="1" y="4.2" width="2.2" height="1.4" fill="#8a8a8a"/><rect x="4.8" y="4.2" width="2.2" height="1.4" fill="#8a8a8a"/></svg>
<div class="t" style="left:107.00px;width:1000px;text-align:center;top:371.80px;font-size:8.5px;color:#222;">2</div>
<svg style="left:603px;top:380.2px" width="8" height="7.5" viewBox="0 0 8 7.5"><rect x="0" y="1.5" width="8" height="6" fill="#3a3a3a"/><rect x="0.5" y="0" width="3" height="3" fill="#1e2e78"/><rect x="4.5" y="0" width="3" height="3" fill="#1e2e78"/><rect x="1" y="4.2" width="2.2" height="1.4" fill="#8a8a8a"/><rect x="4.8" y="4.2" width="2.2" height="1.4" fill="#8a8a8a"/></svg>
<div class="t" style="left:147.00px;width:1000px;text-align:center;top:371.80px;font-size:8.5px;color:#222;">3</div>
<svg style="left:643px;top:380.2px" width="8" height="7.5" viewBox="0 0 8 7.5"><rect x="0" y="1.5" width="8" height="6" fill="#3a3a3a"/><rect x="0.5" y="0" width="3" height="3" fill="#1e2e78"/><rect x="4.5" y="0" width="3" height="3" fill="#1e2e78"/><rect x="1" y="4.2" width="2.2" height="1.4" fill="#8a8a8a"/><rect x="4.8" y="4.2" width="2.2" height="1.4" fill="#8a8a8a"/></svg>
<div class="t" style="left:187.00px;width:1000px;text-align:center;top:371.80px;font-size:8.5px;color:#222;">4</div>
<svg style="left:683px;top:380.2px" width="8" height="7.5" viewBox="0 0 8 7.5"><rect x="0" y="1.5" width="8" height="6" fill="#3a3a3a"/><rect x="0.5" y="0" width="3" height="3" fill="#1e2e78"/><rect x="4.5" y="0" width="3" height="3" fill="#1e2e78"/><rect x="1" y="4.2" width="2.2" height="1.4" fill="#8a8a8a"/><rect x="4.8" y="4.2" width="2.2" height="1.4" fill="#8a8a8a"/></svg>
<div class="t" style="left:227.00px;width:1000px;text-align:center;top:371.80px;font-size:8.5px;color:#222;">5</div>
<svg style="left:723px;top:380.2px" width="8" height="7.5" viewBox="0 0 8 7.5"><rect x="0" y="1.5" width="8" height="6" fill="#3a3a3a"/><rect x="0.5" y="0" width="3" height="3" fill="#1e2e78"/><rect x="4.5" y="0" width="3" height="3" fill="#1e2e78"/><rect x="1" y="4.2" width="2.2" height="1.4" fill="#8a8a8a"/><rect x="4.8" y="4.2" width="2.2" height="1.4" fill="#8a8a8a"/></svg>
<div class="t" style="left:267.00px;width:1000px;text-align:center;top:371.80px;font-size:8.5px;color:#222;">6</div>
<svg style="left:763px;top:380.2px" width="8" height="7.5" viewBox="0 0 8 7.5"><rect x="0" y="1.5" width="8" height="6" fill="#3a3a3a"/><rect x="0.5" y="0" width="3" height="3" fill="#1e2e78"/><rect x="4.5" y="0" width="3" height="3" fill="#1e2e78"/><rect x="1" y="4.2" width="2.2" height="1.4" fill="#8a8a8a"/><rect x="4.8" y="4.2" width="2.2" height="1.4" fill="#8a8a8a"/></svg>
<div class="t" style="left:307.00px;width:1000px;text-align:center;top:371.80px;font-size:8.5px;color:#222;">7</div>
<svg style="left:803px;top:380.2px" width="8" height="7.5" viewBox="0 0 8 7.5"><rect x="0" y="1.5" width="8" height="6" fill="#3a3a3a"/><rect x="0.5" y="0" width="3" height="3" fill="#1e2e78"/><rect x="4.5" y="0" width="3" height="3" fill="#1e2e78"/><rect x="1" y="4.2" width="2.2" height="1.4" fill="#8a8a8a"/><rect x="4.8" y="4.2" width="2.2" height="1.4" fill="#8a8a8a"/></svg>
<div class="t" style="left:347.00px;width:1000px;text-align:center;top:371.80px;font-size:8.5px;color:#222;">8</div>
<svg style="left:843px;top:380.2px" width="8" height="7.5" viewBox="0 0 8 7.5"><rect x="0" y="1.5" width="8" height="6" fill="#3a3a3a"/><rect x="0.5" y="0" width="3" height="3" fill="#1e2e78"/><rect x="4.5" y="0" width="3" height="3" fill="#1e2e78"/><rect x="1" y="4.2" width="2.2" height="1.4" fill="#8a8a8a"/><rect x="4.8" y="4.2" width="2.2" height="1.4" fill="#8a8a8a"/></svg>
<div class="t" style="left:387.00px;width:1000px;text-align:center;top:371.80px;font-size:8.5px;color:#222;">9</div>
<svg style="left:883px;top:380.2px" width="8" height="7.5" viewBox="0 0 8 7.5"><rect x="0" y="1.5" width="8" height="6" fill="#3a3a3a"/><rect x="0.5" y="0" width="3" height="3" fill="#1e2e78"/><rect x="4.5" y="0" width="3" height="3" fill="#1e2e78"/><rect x="1" y="4.2" width="2.2" height="1.4" fill="#8a8a8a"/><rect x="4.8" y="4.2" width="2.2" height="1.4" fill="#8a8a8a"/></svg>
<div class="t" style="left:427.00px;width:1000px;text-align:center;top:371.80px;font-size:8.5px;color:#222;">10</div>
<svg style="left:923px;top:380.2px" width="8" height="7.5" viewBox="0 0 8 7.5"><rect x="0" y="1.5" width="8" height="6" fill="#3a3a3a"/><rect x="0.5" y="0" width="3" height="3" fill="#1e2e78"/><rect x="4.5" y="0" width="3" height="3" fill="#1e2e78"/><rect x="1" y="4.2" width="2.2" height="1.4" fill="#8a8a8a"/><rect x="4.8" y="4.2" width="2.2" height="1.4" fill="#8a8a8a"/></svg>
<div class="t" style="left:467.00px;width:1000px;text-align:center;top:371.80px;font-size:8.5px;color:#222;">11</div>
<svg style="left:963px;top:380.2px" width="8" height="7.5" viewBox="0 0 8 7.5"><rect x="0" y="1.5" width="8" height="6" fill="#3a3a3a"/><rect x="0.5" y="0" width="3" height="3" fill="#1e2e78"/><rect x="4.5" y="0" width="3" height="3" fill="#1e2e78"/><rect x="1" y="4.2" width="2.2" height="1.4" fill="#8a8a8a"/><rect x="4.8" y="4.2" width="2.2" height="1.4" fill="#8a8a8a"/></svg>
<div class="t" style="left:507.00px;width:1000px;text-align:center;top:371.80px;font-size:8.5px;color:#222;">12</div>
<svg style="left:1003px;top:380.2px" width="8" height="7.5" viewBox="0 0 8 7.5"><rect x="0" y="1.5" width="8" height="6" fill="#3a3a3a"/><rect x="0.5" y="0" width="3" height="3" fill="#1e2e78"/><rect x="4.5" y="0" width="3" height="3" fill="#1e2e78"/><rect x="1" y="4.2" width="2.2" height="1.4" fill="#8a8a8a"/><rect x="4.8" y="4.2" width="2.2" height="1.4" fill="#8a8a8a"/></svg>
<div class="a" style="left:526px;top:401.5px;width:521px;height:47.0px;background:#fff"></div>
<div class="a" style="left:527px;top:402.0px;width:519px;height:8px;background:#91bbe7"></div>
<div class="a" style="left:527px;top:411.0px;width:519px;height:36.5px;background:linear-gradient(170deg,#f1f3f7 0%,#eceff4 50%,#e4e8ee 100%)"></div>
<div class="t" style="left:1034.00px;top:403.92px;font-size:6px;color:#d0e0f4;">V</div>
<div class="t" style="left:1040.00px;top:403.92px;font-size:6px;color:#b8cce6;">H</div>
<div class="t" style="left:286.50px;width:1000px;text-align:center;top:419.07px;font-size:26.5px;color:#bcc0c6;">Rangierpanel</div>
<div class="a" style="left:526px;top:450.0px;width:521px;height:47.0px;background:#fff"></div>
<div class="a" style="left:527px;top:450.5px;width:519px;height:8px;background:#91bbe7"></div>
<div class="a" style="left:527px;top:459.5px;width:519px;height:36.5px;background:linear-gradient(170deg,#e8eef7 0%,#dde7f3 50%,#d4e2f1 100%)"></div>
<div class="t" style="left:1034.00px;top:452.42px;font-size:6px;color:#d0e0f4;">V</div>
<div class="t" style="left:1040.00px;top:452.42px;font-size:6px;color:#b8cce6;">H</div>
<div class="t" style="left:524.20px;top:464.24px;font-size:9.4px;color:#222;">MGMT</div>
<div class="t" style="left:519.20px;top:477.01px;font-size:9.2px;color:#222;">Console</div>
<svg style="left:557px;top:465.3px" width="8" height="7.5" viewBox="0 0 8 7.5"><path d="M0 7.5 V3 Q0 0 3 0 H5 Q8 0 8 3 V7.5 Z" fill="#2a4a9a"/><rect x="1" y="5" width="6" height="1.5" fill="#8898c8"/></svg>
<svg style="left:557px;top:478.0px" width="8" height="7.5" viewBox="0 0 8 7.5"><path d="M0 0 V4.5 Q0 7.5 3 7.5 H5 Q8 7.5 8 4.5 V0 Z" fill="#2a4a9a"/><rect x="1" y="1" width="6" height="1.5" fill="#8898c8"/></svg>
<div class="a" style="left:570.2px;top:468.3px;width:6.4px;height:12.7px;background:#2a3f80;border:1px solid #1a2a60"></div>
<div class="a" style="left:572.5px;top:469.5px;width:1.6px;height:10px;background:#8a96b8"></div>
<div class="t" style="left:564.70px;top:479.71px;font-size:9.2px;color:#222;">USB</div>
<div class="a" style="left:589.2px;top:474.5px;width:14.2px;height:9.1px;background:#dae6f2;border:1px solid #c4c4c4"></div>
<div class="a" style="left:589.2px;top:485.6px;width:14.2px;height:8.7px;background:#e4e4e4;border:1px solid #c4c4c4"></div>
<div class="a" style="left:606.8000000000001px;top:474.5px;width:14.2px;height:9.1px;background:#dae6f2;border:1px solid #c4c4c4"></div>
<div class="a" style="left:606.8000000000001px;top:485.6px;width:14.2px;height:8.7px;background:#e4e4e4;border:1px solid #c4c4c4"></div>
<div class="a" style="left:624.4000000000001px;top:474.5px;width:14.2px;height:9.1px;background:#e4e4e4;border:1px solid #c4c4c4"></div>
<div class="a" style="left:624.4000000000001px;top:485.6px;width:14.2px;height:8.7px;background:#e4e4e4;border:1px solid #c4c4c4"></div>
<div class="a" style="left:642.0px;top:474.5px;width:14.2px;height:9.1px;background:#e4e4e4;border:1px solid #c4c4c4"></div>
<div class="a" style="left:642.0px;top:485.6px;width:14.2px;height:8.7px;background:#e4e4e4;border:1px solid #c4c4c4"></div>
<svg style="left:591.7px;top:477.0px" width="9" height="6" viewBox="0 0 9 6"><circle cx="2.2" cy="3" r="2.2" fill="#555"/><circle cx="6.6" cy="3" r="2.2" fill="#555"/><circle cx="2.2" cy="1.4" r="1.2" fill="#2a9a2a"/><circle cx="6.6" cy="1.4" r="1.2" fill="#2a9a2a"/></svg>
<div class="t" style="left:96.30px;width:1000px;text-align:center;top:467.22px;font-size:8.6px;color:#222;">0</div>
<svg style="left:609.3000000000001px;top:477.0px" width="9" height="6" viewBox="0 0 9 6"><circle cx="2.2" cy="3" r="2.2" fill="#555"/><circle cx="6.6" cy="3" r="2.2" fill="#555"/><circle cx="2.2" cy="1.4" r="1.2" fill="#2a9a2a"/><circle cx="6.6" cy="1.4" r="1.2" fill="#2a9a2a"/></svg>
<div class="t" style="left:113.90px;width:1000px;text-align:center;top:467.22px;font-size:8.6px;color:#222;">1</div>
<div class="a" style="left:663.6px;top:474.5px;width:14.2px;height:9.1px;background:#dae6f2;border:1px solid #c4c4c4"></div>
<div class="a" style="left:663.6px;top:485.6px;width:14.2px;height:8.7px;background:#dae6f2;border:1px solid #c4c4c4"></div>
<div class="a" style="left:681.2px;top:474.5px;width:14.2px;height:9.1px;background:#dae6f2;border:1px solid #c4c4c4"></div>
<div class="a" style="left:681.2px;top:485.6px;width:14.2px;height:8.7px;background:#dae6f2;border:1px solid #c4c4c4"></div>
<div class="a" style="left:698.8000000000001px;top:474.5px;width:14.2px;height:9.1px;background:#dae6f2;border:1px solid #c4c4c4"></div>
<div class="a" style="left:698.8000000000001px;top:485.6px;width:14.2px;height:8.7px;background:#dae6f2;border:1px solid #c4c4c4"></div>
<div class="a" style="left:716.4px;top:474.5px;width:14.2px;height:9.1px;background:#dae6f2;border:1px solid #c4c4c4"></div>
<div class="a" style="left:716.4px;top:485.6px;width:14.2px;height:8.7px;background:#dae6f2;border:1px solid #c4c4c4"></div>
<svg style="left:666.2px;top:475.8px" width="9" height="8" viewBox="0 0 9 8"><path d="M0.5 0.5 H8.5 V4.5 L4.5 7.5 L0.5 4.5 Z" fill="#0a800a" stroke="#064806" stroke-width="0.8"/><rect x="2" y="0.8" width="5" height="1.4" fill="#a0c8a0" opacity="0.6"/></svg>
<div class="a" style="left:663.0px;top:485.0px;width:15.5px;height:10.5px;background:#ee5c66"></div>
<svg style="left:666.2px;top:486.5px" width="9" height="8" viewBox="0 0 9 8"><path d="M0.5 0.5 H8.5 V4.5 L4.5 7.5 L0.5 4.5 Z" fill="#a03010" stroke="#602008" stroke-width="0.8"/><rect x="2" y="0.8" width="5" height="1.4" fill="#a0c8a0" opacity="0.6"/></svg>
<div class="t" style="left:170.70px;width:1000px;text-align:center;top:467.22px;font-size:8.6px;color:#222;">8</div>
<div class="t" style="left:170.70px;width:1000px;text-align:center;top:478.22px;font-size:8.6px;color:#222;">12</div>
<svg style="left:683.8000000000001px;top:475.8px" width="9" height="8" viewBox="0 0 9 8"><path d="M0.5 0.5 H8.5 V4.5 L4.5 7.5 L0.5 4.5 Z" fill="#0a800a" stroke="#064806" stroke-width="0.8"/><rect x="2" y="0.8" width="5" height="1.4" fill="#a0c8a0" opacity="0.6"/></svg>
<svg style="left:683.8000000000001px;top:486.5px" width="9" height="8" viewBox="0 0 9 8"><path d="M0.5 0.5 H8.5 V4.5 L4.5 7.5 L0.5 4.5 Z" fill="#0a800a" stroke="#064806" stroke-width="0.8"/><rect x="2" y="0.8" width="5" height="1.4" fill="#a0c8a0" opacity="0.6"/></svg>
<div class="t" style="left:188.30px;width:1000px;text-align:center;top:467.22px;font-size:8.6px;color:#222;">9</div>
<div class="t" style="left:188.30px;width:1000px;text-align:center;top:478.22px;font-size:8.6px;color:#222;">13</div>
<svg style="left:701.4000000000001px;top:475.8px" width="9" height="8" viewBox="0 0 9 8"><path d="M0.5 0.5 H8.5 V4.5 L4.5 7.5 L0.5 4.5 Z" fill="#0a800a" stroke="#064806" stroke-width="0.8"/><rect x="2" y="0.8" width="5" height="1.4" fill="#a0c8a0" opacity="0.6"/></svg>
<svg style="left:701.4000000000001px;top:486.5px" width="9" height="8" viewBox="0 0 9 8"><path d="M0.5 0.5 H8.5 V4.5 L4.5 7.5 L0.5 4.5 Z" fill="#0a800a" stroke="#064806" stroke-width="0.8"/><rect x="2" y="0.8" width="5" height="1.4" fill="#a0c8a0" opacity="0.6"/></svg>
<div class="t" style="left:205.90px;width:1000px;text-align:center;top:467.22px;font-size:8.6px;color:#222;">10</div>
<div class="t" style="left:205.90px;width:1000px;text-align:center;top:478.22px;font-size:8.6px;color:#222;">14</div>
<svg style="left:719.0px;top:475.8px" width="9" height="8" viewBox="0 0 9 8"><path d="M0.5 0.5 H8.5 V4.5 L4.5 7.5 L0.5 4.5 Z" fill="#0a800a" stroke="#064806" stroke-width="0.8"/><rect x="2" y="0.8" width="5" height="1.4" fill="#a0c8a0" opacity="0.6"/></svg>
<svg style="left:719.0px;top:486.5px" width="9" height="8" viewBox="0 0 9 8"><path d="M0.5 0.5 H8.5 V4.5 L4.5 7.5 L0.5 4.5 Z" fill="#0a800a" stroke="#064806" stroke-width="0.8"/><rect x="2" y="0.8" width="5" height="1.4" fill="#a0c8a0" opacity="0.6"/></svg>
<div class="t" style="left:223.50px;width:1000px;text-align:center;top:467.22px;font-size:8.6px;color:#222;">11</div>
<div class="t" style="left:223.50px;width:1000px;text-align:center;top:478.22px;font-size:8.6px;color:#222;">15</div>
<div class="a" style="left:740.7px;top:474.5px;width:14.2px;height:9.1px;background:#e4e4e4;border:1px solid #c4c4c4"></div>
<div class="a" style="left:740.7px;top:485.6px;width:14.2px;height:8.7px;background:#e4e4e4;border:1px solid #c4c4c4"></div>
<div class="a" style="left:758.3000000000001px;top:474.5px;width:14.2px;height:9.1px;background:#e4e4e4;border:1px solid #c4c4c4"></div>
<div class="a" style="left:758.3000000000001px;top:485.6px;width:14.2px;height:8.7px;background:#e4e4e4;border:1px solid #c4c4c4"></div>
<div class="a" style="left:775.9000000000001px;top:474.5px;width:14.2px;height:9.1px;background:#e4e4e4;border:1px solid #c4c4c4"></div>
<div class="a" style="left:775.9000000000001px;top:485.6px;width:14.2px;height:8.7px;background:#e4e4e4;border:1px solid #c4c4c4"></div>
<div class="a" style="left:793.5px;top:474.5px;width:14.2px;height:9.1px;background:#e4e4e4;border:1px solid #c4c4c4"></div>
<div class="a" style="left:793.5px;top:485.6px;width:14.2px;height:8.7px;background:#e4e4e4;border:1px solid #c4c4c4"></div>
<div class="a" style="left:813.5px;top:474.5px;width:14.2px;height:9.1px;background:#dae6f2;border:1px solid #c4c4c4"></div>
<div class="a" style="left:813.5px;top:485.6px;width:14.2px;height:8.7px;background:#dae6f2;border:1px solid #c4c4c4"></div>
<div class="a" style="left:831.1px;top:474.5px;width:14.2px;height:9.1px;background:#dae6f2;border:1px solid #c4c4c4"></div>
<div class="a" style="left:831.1px;top:485.6px;width:14.2px;height:8.7px;background:#dae6f2;border:1px solid #c4c4c4"></div>
<div class="a" style="left:848.7px;top:474.5px;width:14.2px;height:9.1px;background:#dae6f2;border:1px solid #c4c4c4"></div>
<div class="a" style="left:848.7px;top:485.6px;width:14.2px;height:8.7px;background:#dae6f2;border:1px solid #c4c4c4"></div>
<div class="a" style="left:866.3px;top:474.5px;width:14.2px;height:9.1px;background:#dae6f2;border:1px solid #c4c4c4"></div>
<div class="a" style="left:866.3px;top:485.6px;width:14.2px;height:8.7px;background:#dae6f2;border:1px solid #c4c4c4"></div>
<svg style="left:816.1px;top:475.8px" width="9" height="8" viewBox="0 0 9 8"><path d="M0.5 0.5 H8.5 V4.5 L4.5 7.5 L0.5 4.5 Z" fill="#0a800a" stroke="#064806" stroke-width="0.8"/><rect x="2" y="0.8" width="5" height="1.4" fill="#a0c8a0" opacity="0.6"/></svg>
<svg style="left:816.1px;top:486.5px" width="9" height="8" viewBox="0 0 9 8"><path d="M0.5 0.5 H8.5 V4.5 L4.5 7.5 L0.5 4.5 Z" fill="#0a800a" stroke="#064806" stroke-width="0.8"/><rect x="2" y="0.8" width="5" height="1.4" fill="#a0c8a0" opacity="0.6"/></svg>
<div class="t" style="left:320.60px;width:1000px;text-align:center;top:467.22px;font-size:8.6px;color:#222;">24</div>
<div class="t" style="left:320.60px;width:1000px;text-align:center;top:478.22px;font-size:8.6px;color:#222;">28</div>
<svg style="left:833.7px;top:475.8px" width="9" height="8" viewBox="0 0 9 8"><path d="M0.5 0.5 H8.5 V4.5 L4.5 7.5 L0.5 4.5 Z" fill="#0a800a" stroke="#064806" stroke-width="0.8"/><rect x="2" y="0.8" width="5" height="1.4" fill="#a0c8a0" opacity="0.6"/></svg>
<svg style="left:833.7px;top:486.5px" width="9" height="8" viewBox="0 0 9 8"><path d="M0.5 0.5 H8.5 V4.5 L4.5 7.5 L0.5 4.5 Z" fill="#0a800a" stroke="#064806" stroke-width="0.8"/><rect x="2" y="0.8" width="5" height="1.4" fill="#a0c8a0" opacity="0.6"/></svg>
<div class="t" style="left:338.20px;width:1000px;text-align:center;top:467.22px;font-size:8.6px;color:#222;">25</div>
<div class="t" style="left:338.20px;width:1000px;text-align:center;top:478.22px;font-size:8.6px;color:#222;">29</div>
<svg style="left:851.3000000000001px;top:475.8px" width="9" height="8" viewBox="0 0 9 8"><path d="M0.5 0.5 H8.5 V4.5 L4.5 7.5 L0.5 4.5 Z" fill="#0a800a" stroke="#064806" stroke-width="0.8"/><rect x="2" y="0.8" width="5" height="1.4" fill="#a0c8a0" opacity="0.6"/></svg>
<svg style="left:851.3000000000001px;top:486.5px" width="9" height="8" viewBox="0 0 9 8"><path d="M0.5 0.5 H8.5 V4.5 L4.5 7.5 L0.5 4.5 Z" fill="#0a800a" stroke="#064806" stroke-width="0.8"/><rect x="2" y="0.8" width="5" height="1.4" fill="#a0c8a0" opacity="0.6"/></svg>
<div class="t" style="left:355.80px;width:1000px;text-align:center;top:467.22px;font-size:8.6px;color:#222;">26</div>
<div class="t" style="left:355.80px;width:1000px;text-align:center;top:478.22px;font-size:8.6px;color:#222;">30</div>
<svg style="left:868.9px;top:475.8px" width="9" height="8" viewBox="0 0 9 8"><path d="M0.5 0.5 H8.5 V4.5 L4.5 7.5 L0.5 4.5 Z" fill="#0a800a" stroke="#064806" stroke-width="0.8"/><rect x="2" y="0.8" width="5" height="1.4" fill="#a0c8a0" opacity="0.6"/></svg>
<svg style="left:868.9px;top:486.5px" width="9" height="8" viewBox="0 0 9 8"><path d="M0.5 0.5 H8.5 V4.5 L4.5 7.5 L0.5 4.5 Z" fill="#0a800a" stroke="#064806" stroke-width="0.8"/><rect x="2" y="0.8" width="5" height="1.4" fill="#a0c8a0" opacity="0.6"/></svg>
<div class="t" style="left:373.40px;width:1000px;text-align:center;top:467.22px;font-size:8.6px;color:#222;">27</div>
<div class="t" style="left:373.40px;width:1000px;text-align:center;top:478.22px;font-size:8.6px;color:#222;">31</div>
<div class="a" style="left:890.9px;top:474.5px;width:14.2px;height:9.1px;background:#e4e4e4;border:1px solid #c4c4c4"></div>
<div class="a" style="left:890.9px;top:485.6px;width:14.2px;height:8.7px;background:#e4e4e4;border:1px solid #c4c4c4"></div>
<div class="a" style="left:908.5px;top:474.5px;width:14.2px;height:9.1px;background:#e4e4e4;border:1px solid #c4c4c4"></div>
<div class="a" style="left:908.5px;top:485.6px;width:14.2px;height:8.7px;background:#e4e4e4;border:1px solid #c4c4c4"></div>
<div class="a" style="left:926.1px;top:474.5px;width:14.2px;height:9.1px;background:#e4e4e4;border:1px solid #c4c4c4"></div>
<div class="a" style="left:926.1px;top:485.6px;width:14.2px;height:8.7px;background:#e4e4e4;border:1px solid #c4c4c4"></div>
<div class="a" style="left:943.6999999999999px;top:474.5px;width:14.2px;height:9.1px;background:#e4e4e4;border:1px solid #c4c4c4"></div>
<div class="a" style="left:943.6999999999999px;top:485.6px;width:14.2px;height:8.7px;background:#e4e4e4;border:1px solid #c4c4c4"></div>
<div class="a" style="left:965.1px;top:474.5px;width:14.2px;height:9.1px;background:#dae6f2;border:1px solid #c4c4c4"></div>
<div class="a" style="left:965.1px;top:485.6px;width:14.2px;height:8.7px;background:#dae6f2;border:1px solid #c4c4c4"></div>
<div class="a" style="left:982.7px;top:474.5px;width:14.2px;height:9.1px;background:#dae6f2;border:1px solid #c4c4c4"></div>
<div class="a" style="left:982.7px;top:485.6px;width:14.2px;height:8.7px;background:#dae6f2;border:1px solid #c4c4c4"></div>
<div class="a" style="left:1000.3000000000001px;top:474.5px;width:14.2px;height:9.1px;background:#dae6f2;border:1px solid #c4c4c4"></div>
<div class="a" style="left:1000.3000000000001px;top:485.6px;width:14.2px;height:8.7px;background:#dae6f2;border:1px solid #c4c4c4"></div>
<div class="a" style="left:1017.9px;top:474.5px;width:14.2px;height:9.1px;background:#dae6f2;border:1px solid #c4c4c4"></div>
<div class="a" style="left:1017.9px;top:485.6px;width:14.2px;height:8.7px;background:#dae6f2;border:1px solid #c4c4c4"></div>
<svg style="left:967.7px;top:475.8px" width="9" height="8" viewBox="0 0 9 8"><path d="M0.5 0.5 H8.5 V4.5 L4.5 7.5 L0.5 4.5 Z" fill="#0a800a" stroke="#064806" stroke-width="0.8"/><rect x="2" y="0.8" width="5" height="1.4" fill="#a0c8a0" opacity="0.6"/></svg>
<svg style="left:967.7px;top:486.5px" width="9" height="8" viewBox="0 0 9 8"><path d="M0.5 0.5 H8.5 V4.5 L4.5 7.5 L0.5 4.5 Z" fill="#0a800a" stroke="#064806" stroke-width="0.8"/><rect x="2" y="0.8" width="5" height="1.4" fill="#a0c8a0" opacity="0.6"/></svg>
<div class="t" style="left:472.20px;width:1000px;text-align:center;top:467.22px;font-size:8.6px;color:#222;">40</div>
<div class="t" style="left:472.20px;width:1000px;text-align:center;top:478.22px;font-size:8.6px;color:#222;">44</div>
<svg style="left:985.3000000000001px;top:475.8px" width="9" height="8" viewBox="0 0 9 8"><path d="M0.5 0.5 H8.5 V4.5 L4.5 7.5 L0.5 4.5 Z" fill="#0a800a" stroke="#064806" stroke-width="0.8"/><rect x="2" y="0.8" width="5" height="1.4" fill="#a0c8a0" opacity="0.6"/></svg>
<svg style="left:985.3000000000001px;top:486.5px" width="9" height="8" viewBox="0 0 9 8"><path d="M0.5 0.5 H8.5 V4.5 L4.5 7.5 L0.5 4.5 Z" fill="#0a800a" stroke="#064806" stroke-width="0.8"/><rect x="2" y="0.8" width="5" height="1.4" fill="#a0c8a0" opacity="0.6"/></svg>
<div class="t" style="left:489.80px;width:1000px;text-align:center;top:467.22px;font-size:8.6px;color:#222;">41</div>
<div class="t" style="left:489.80px;width:1000px;text-align:center;top:478.22px;font-size:8.6px;color:#222;">45</div>
<svg style="left:1002.9000000000001px;top:475.8px" width="9" height="8" viewBox="0 0 9 8"><path d="M0.5 0.5 H8.5 V4.5 L4.5 7.5 L0.5 4.5 Z" fill="#0a800a" stroke="#064806" stroke-width="0.8"/><rect x="2" y="0.8" width="5" height="1.4" fill="#a0c8a0" opacity="0.6"/></svg>
<svg style="left:1002.9000000000001px;top:486.5px" width="9" height="8" viewBox="0 0 9 8"><path d="M0.5 0.5 H8.5 V4.5 L4.5 7.5 L0.5 4.5 Z" fill="#0a800a" stroke="#064806" stroke-width="0.8"/><rect x="2" y="0.8" width="5" height="1.4" fill="#a0c8a0" opacity="0.6"/></svg>
<div class="t" style="left:507.40px;width:1000px;text-align:center;top:467.22px;font-size:8.6px;color:#222;">42</div>
<div class="t" style="left:507.40px;width:1000px;text-align:center;top:478.22px;font-size:8.6px;color:#222;">46</div>
<svg style="left:1020.5px;top:475.8px" width="9" height="8" viewBox="0 0 9 8"><path d="M0.5 0.5 H8.5 V4.5 L4.5 7.5 L0.5 4.5 Z" fill="#0a800a" stroke="#064806" stroke-width="0.8"/><rect x="2" y="0.8" width="5" height="1.4" fill="#a0c8a0" opacity="0.6"/></svg>
<svg style="left:1020.5px;top:486.5px" width="9" height="8" viewBox="0 0 9 8"><path d="M0.5 0.5 H8.5 V4.5 L4.5 7.5 L0.5 4.5 Z" fill="#0a800a" stroke="#064806" stroke-width="0.8"/><rect x="2" y="0.8" width="5" height="1.4" fill="#a0c8a0" opacity="0.6"/></svg>
<div class="t" style="left:525.00px;width:1000px;text-align:center;top:467.22px;font-size:8.6px;color:#222;">43</div>
<div class="t" style="left:525.00px;width:1000px;text-align:center;top:478.22px;font-size:8.6px;color:#222;">47</div>
<div class="a" style="left:526px;top:498.5px;width:521px;height:47.0px;background:#fff"></div>
<div class="a" style="left:527px;top:499.0px;width:519px;height:8px;background:#91bbe7"></div>
<div class="a" style="left:527px;top:508.0px;width:519px;height:36.5px;background:linear-gradient(170deg,#f1f3f7 0%,#eceff4 50%,#e4e8ee 100%)"></div>
<div class="t" style="left:1034.00px;top:500.92px;font-size:6px;color:#d0e0f4;">V</div>
<div class="t" style="left:1040.00px;top:500.92px;font-size:6px;color:#b8cce6;">H</div>
<div class="t" style="left:286.50px;width:1000px;text-align:center;top:516.07px;font-size:26.5px;color:#bcc0c6;">Blindpanel</div>
<div class="a" style="left:526px;top:547.0px;width:521px;height:94.5px;background:#fff"></div>
<div class="a" style="left:527px;top:548.0px;width:519px;height:15.7px;background:linear-gradient(#92bbe6 0%,#94b6dc 60%,#8ea6c4 100%)"></div>
<div class="t" style="left:530.30px;top:550.94px;font-size:10.7px;color:#f4f8fc;">FILESRV01</div>
<div class="t" style="left:1017.00px;top:551.19px;font-size:11px;color:#f0f4fa;">V</div>
<div class="t" style="left:1030.50px;top:551.19px;font-size:11px;color:#f0f4fa;">H</div>
<div class="a" style="left:527px;top:564.0px;width:519px;height:76.5px;background:linear-gradient(100deg,#e2e2e2 0%,#d4d4d4 40%,#cbcbcb 100%)"></div>
<div class="a" style="left:551.6px;top:568.4px;width:84.8px;height:71.2px;background:#b4b8c0"></div>
<div class="a" style="left:552.6px;top:569.4px;width:82.8px;height:33.5px;background:linear-gradient(160deg,#e8eef6,#d8e4f2)"></div>
<div class="t" style="left:582.00px;top:578.11px;font-size:9.2px;color:#222;">Power</div>
<svg style="left:612px;top:573.1999999999999px" width="13" height="19" viewBox="0 0 13 19"><path d="M3 0.5 H10.5 Q12.5 0.5 12.5 2.5 V16.5 Q12.5 18.5 10.5 18.5 H3 L0.5 15.5 V3.5 Z" fill="#087808" stroke="#043a04" stroke-width="1"/><rect x="7" y="3.5" width="2.6" height="1.6" fill="#444"/><rect x="3.5" y="8.7" width="2.6" height="1.6" fill="#444"/><rect x="7" y="13.8" width="2.6" height="1.6" fill="#444"/></svg>
<div class="a" style="left:552.6px;top:604.6px;width:82.8px;height:33.99999999999999px;background:linear-gradient(160deg,#e8eef6,#d8e4f2)"></div>
<div class="t" style="left:582.00px;top:613.31px;font-size:9.2px;color:#222;">Power</div>
<svg style="left:612px;top:608.4px" width="13" height="19" viewBox="0 0 13 19"><path d="M3 0.5 H10.5 Q12.5 0.5 12.5 2.5 V16.5 Q12.5 18.5 10.5 18.5 H3 L0.5 15.5 V3.5 Z" fill="#087808" stroke="#043a04" stroke-width="1"/><rect x="7" y="3.5" width="2.6" height="1.6" fill="#444"/><rect x="3.5" y="8.7" width="2.6" height="1.6" fill="#444"/><rect x="7" y="13.8" width="2.6" height="1.6" fill="#444"/></svg>
<div class="a" style="left:647.3px;top:577.0px;width:18.2px;height:54.3px;background:linear-gradient(#f0f0f0,#e8e8e8);border:1px solid #d0d0d0"></div>
<div class="a" style="left:695.3px;top:568.6px;width:117.70000000000005px;height:14.600000000000001px;background:#ececec;border:1px solid #d2d2d2;border-bottom-color:#c8c8c8;border-right-color:#c8c8c8"></div>
<div class="t" style="left:254.15px;width:1000px;text-align:center;top:572.48px;font-size:9px;color:#c4c4c4;">PCI 7</div>
<div class="a" style="left:695.3px;top:586.2px;width:117.70000000000005px;height:13.799999999999997px;background:#ececec;border:1px solid #d2d2d2;border-bottom-color:#c8c8c8;border-right-color:#c8c8c8"></div>
<div class="t" style="left:254.15px;width:1000px;text-align:center;top:590.08px;font-size:9px;color:#c4c4c4;">PCI 6</div>
<div class="a" style="left:716.4px;top:604.7px;width:68.80000000000007px;height:14.099999999999994px;background:#ececec;border:1px solid #d2d2d2;border-bottom-color:#c8c8c8;border-right-color:#c8c8c8"></div>
<div class="t" style="left:250.80px;width:1000px;text-align:center;top:608.58px;font-size:9px;color:#c4c4c4;">PCI 5</div>
<div class="a" style="left:820.7px;top:568.6px;width:117.59999999999991px;height:14.600000000000001px;background:#ececec;border:1px solid #d2d2d2;border-bottom-color:#c8c8c8;border-right-color:#c8c8c8"></div>
<div class="t" style="left:379.50px;width:1000px;text-align:center;top:572.48px;font-size:9px;color:#c4c4c4;">PCI 4</div>
<div class="a" style="left:820.7px;top:586.2px;width:117.59999999999991px;height:13.799999999999997px;background:#ececec;border:1px solid #d2d2d2;border-bottom-color:#c8c8c8;border-right-color:#c8c8c8"></div>
<div class="t" style="left:379.50px;width:1000px;text-align:center;top:590.08px;font-size:9px;color:#c4c4c4;">PCI 3</div>
<div class="a" style="left:859px;top:618.6px;width:73.6px;height:11.4px;background:#e8e8e8;border:1px solid #dadada"></div>
<div class="t" style="left:395.80px;width:1000px;text-align:center;top:620.73px;font-size:8px;color:#c8c8c8;">DinamicLOM</div>
<svg style="left:685px;top:622.0px" width="22" height="9" viewBox="0 0 22 9"><rect x="0.5" y="0.5" width="21" height="8" rx="1.5" fill="#e0e0e0" stroke="#888" stroke-width="0.8"/><path d="M5 2 H17 L15.5 7 H6.5 Z" fill="#3a5ab0"/></svg>
<div class="t" style="left:684.50px;top:631.21px;font-size:9.2px;color:#222;">COM</div>
<svg style="left:729.5px;top:622.0px" width="22" height="9" viewBox="0 0 22 9"><rect x="0.5" y="0.5" width="21" height="8" rx="1.5" fill="#e0e0e0" stroke="#888" stroke-width="0.8"/><path d="M5 2 H17 L15.5 7 H6.5 Z" fill="#3a5ab0"/></svg>
<div class="t" style="left:726.00px;top:631.21px;font-size:9.2px;color:#222;">VGA 2</div>
<svg style="left:808px;top:623.0px" width="9" height="7" viewBox="0 0 9 7"><path d="M0 7 V3 Q0 0 3 0 H6 Q9 0 9 3 V7 Z" fill="#3a5ab0"/></svg>
<div class="t" style="left:796.50px;top:629.04px;font-size:9.4px;color:#222;">MGMT</div>
<div class="t" style="left:825.00px;top:607.21px;font-size:9.2px;color:#222;">USB 3</div>
<div class="a" style="left:834px;top:617.5px;width:10px;height:5px;background:#1a2a5a"></div>
<div class="a" style="left:834px;top:627.5px;width:10px;height:5px;background:#1a2a5a"></div>
<div class="t" style="left:825.00px;top:632.71px;font-size:9.2px;color:#222;">USB 4</div>
<div class="a" style="left:956.7px;top:577.4px;width:18.2px;height:53.6px;background:#dce8f4;border:1px solid #c8d4e0"></div>
<svg style="left:959.7px;top:584.0px" width="8" height="8" viewBox="0 0 8 8"><path d="M7.5 0.5 V7.5 H3 L0.5 4 L3 0.5 Z" fill="#0a800a" stroke="#102040" stroke-width="0.6"/></svg>
<div class="t" style="left:968.00px;top:583.26px;font-size:9.5px;color:#222;">1</div>
<svg style="left:959.7px;top:596.3px" width="8" height="8" viewBox="0 0 8 8"><path d="M7.5 0.5 V7.5 H3 L0.5 4 L3 0.5 Z" fill="#1a3a90" stroke="#102040" stroke-width="0.6"/></svg>
<div class="t" style="left:968.00px;top:595.56px;font-size:9.5px;color:#222;">2</div>
<svg style="left:959.7px;top:608.6px" width="8" height="8" viewBox="0 0 8 8"><path d="M7.5 0.5 V7.5 H3 L0.5 4 L3 0.5 Z" fill="#1a3a90" stroke="#102040" stroke-width="0.6"/></svg>
<div class="t" style="left:968.00px;top:607.86px;font-size:9.5px;color:#222;">3</div>
<svg style="left:959.7px;top:620.9px" width="8" height="8" viewBox="0 0 8 8"><path d="M7.5 0.5 V7.5 H3 L0.5 4 L3 0.5 Z" fill="#1a3a90" stroke="#102040" stroke-width="0.6"/></svg>
<div class="t" style="left:968.00px;top:620.16px;font-size:9.5px;color:#222;">4</div>
<div class="a" style="left:980.7px;top:577.4px;width:18.2px;height:53.6px;background:#dce8f4;border:1px solid #c8d4e0"></div>
<svg style="left:983.7px;top:584.0px" width="8" height="8" viewBox="0 0 8 8"><path d="M7.5 0.5 V7.5 H3 L0.5 4 L3 0.5 Z" fill="#0a800a" stroke="#102040" stroke-width="0.6"/></svg>
<div class="t" style="left:992.00px;top:583.26px;font-size:9.5px;color:#222;">1</div>
<svg style="left:983.7px;top:596.3px" width="8" height="8" viewBox="0 0 8 8"><path d="M7.5 0.5 V7.5 H3 L0.5 4 L3 0.5 Z" fill="#1a3a90" stroke="#102040" stroke-width="0.6"/></svg>
<div class="t" style="left:992.00px;top:595.56px;font-size:9.5px;color:#222;">2</div>
<svg style="left:983.7px;top:608.6px" width="8" height="8" viewBox="0 0 8 8"><path d="M7.5 0.5 V7.5 H3 L0.5 4 L3 0.5 Z" fill="#1a3a90" stroke="#102040" stroke-width="0.6"/></svg>
<div class="t" style="left:992.00px;top:607.86px;font-size:9.5px;color:#222;">3</div>
<svg style="left:983.7px;top:620.9px" width="8" height="8" viewBox="0 0 8 8"><path d="M7.5 0.5 V7.5 H3 L0.5 4 L3 0.5 Z" fill="#1a3a90" stroke="#102040" stroke-width="0.6"/></svg>
<div class="t" style="left:992.00px;top:620.16px;font-size:9.5px;color:#222;">4</div>
<div class="a" style="left:526px;top:644.0px;width:521px;height:94.5px;background:#fff"></div>
<div class="a" style="left:527px;top:645.0px;width:519px;height:15.7px;background:linear-gradient(#92bbe6 0%,#94b6dc 60%,#8ea6c4 100%)"></div>
<div class="t" style="left:530.30px;top:647.94px;font-size:10.7px;color:#f4f8fc;">FILESRV02</div>
<div class="t" style="left:1017.00px;top:648.19px;font-size:11px;color:#f0f4fa;">V</div>
<div class="t" style="left:1030.50px;top:648.19px;font-size:11px;color:#f0f4fa;">H</div>
<div class="a" style="left:527px;top:661.0px;width:519px;height:76.5px;background:linear-gradient(100deg,#e2e2e2 0%,#d4d4d4 40%,#cbcbcb 100%)"></div>
<div class="a" style="left:551.6px;top:665.4px;width:84.8px;height:71.2px;background:#b4b8c0"></div>
<div class="a" style="left:552.6px;top:666.4px;width:82.8px;height:33.5px;background:linear-gradient(160deg,#e8eef6,#d8e4f2)"></div>
<div class="t" style="left:582.00px;top:675.11px;font-size:9.2px;color:#222;">Power</div>
<svg style="left:612px;top:670.1999999999999px" width="13" height="19" viewBox="0 0 13 19"><path d="M3 0.5 H10.5 Q12.5 0.5 12.5 2.5 V16.5 Q12.5 18.5 10.5 18.5 H3 L0.5 15.5 V3.5 Z" fill="#087808" stroke="#043a04" stroke-width="1"/><rect x="7" y="3.5" width="2.6" height="1.6" fill="#444"/><rect x="3.5" y="8.7" width="2.6" height="1.6" fill="#444"/><rect x="7" y="13.8" width="2.6" height="1.6" fill="#444"/></svg>
<div class="a" style="left:552.6px;top:701.6px;width:82.8px;height:33.99999999999999px;background:linear-gradient(160deg,#e8eef6,#d8e4f2)"></div>
<div class="t" style="left:582.00px;top:710.31px;font-size:9.2px;color:#222;">Power</div>
<svg style="left:612px;top:705.4px" width="13" height="19" viewBox="0 0 13 19"><path d="M3 0.5 H10.5 Q12.5 0.5 12.5 2.5 V16.5 Q12.5 18.5 10.5 18.5 H3 L0.5 15.5 V3.5 Z" fill="#087808" stroke="#043a04" stroke-width="1"/><rect x="7" y="3.5" width="2.6" height="1.6" fill="#444"/><rect x="3.5" y="8.7" width="2.6" height="1.6" fill="#444"/><rect x="7" y="13.8" width="2.6" height="1.6" fill="#444"/></svg>
<div class="a" style="left:647.3px;top:674.0px;width:18.2px;height:54.3px;background:linear-gradient(#f0f0f0,#e8e8e8);border:1px solid #d0d0d0"></div>
<div class="a" style="left:695.3px;top:665.6px;width:117.70000000000005px;height:14.600000000000001px;background:#ececec;border:1px solid #d2d2d2;border-bottom-color:#c8c8c8;border-right-color:#c8c8c8"></div>
<div class="t" style="left:254.15px;width:1000px;text-align:center;top:669.48px;font-size:9px;color:#c4c4c4;">PCI 7</div>
<div class="a" style="left:695.3px;top:683.2px;width:117.70000000000005px;height:13.799999999999997px;background:#ececec;border:1px solid #d2d2d2;border-bottom-color:#c8c8c8;border-right-color:#c8c8c8"></div>
<div class="t" style="left:254.15px;width:1000px;text-align:center;top:687.08px;font-size:9px;color:#c4c4c4;">PCI 6</div>
<div class="a" style="left:716.4px;top:701.7px;width:68.80000000000007px;height:14.099999999999994px;background:#ececec;border:1px solid #d2d2d2;border-bottom-color:#c8c8c8;border-right-color:#c8c8c8"></div>
<div class="t" style="left:250.80px;width:1000px;text-align:center;top:705.58px;font-size:9px;color:#c4c4c4;">PCI 5</div>
<div class="a" style="left:820.7px;top:665.6px;width:117.59999999999991px;height:14.600000000000001px;background:#ececec;border:1px solid #d2d2d2;border-bottom-color:#c8c8c8;border-right-color:#c8c8c8"></div>
<div class="t" style="left:379.50px;width:1000px;text-align:center;top:669.48px;font-size:9px;color:#c4c4c4;">PCI 4</div>
<div class="a" style="left:820.7px;top:683.2px;width:117.59999999999991px;height:13.799999999999997px;background:#ececec;border:1px solid #d2d2d2;border-bottom-color:#c8c8c8;border-right-color:#c8c8c8"></div>
<div class="t" style="left:379.50px;width:1000px;text-align:center;top:687.08px;font-size:9px;color:#c4c4c4;">PCI 3</div>
<div class="a" style="left:859px;top:715.6px;width:73.6px;height:11.4px;background:#e8e8e8;border:1px solid #dadada"></div>
<div class="t" style="left:395.80px;width:1000px;text-align:center;top:717.73px;font-size:8px;color:#c8c8c8;">DinamicLOM</div>
<svg style="left:685px;top:719.0px" width="22" height="9" viewBox="0 0 22 9"><rect x="0.5" y="0.5" width="21" height="8" rx="1.5" fill="#e0e0e0" stroke="#888" stroke-width="0.8"/><path d="M5 2 H17 L15.5 7 H6.5 Z" fill="#3a5ab0"/></svg>
<div class="t" style="left:684.50px;top:728.21px;font-size:9.2px;color:#222;">COM</div>
<svg style="left:729.5px;top:719.0px" width="22" height="9" viewBox="0 0 22 9"><rect x="0.5" y="0.5" width="21" height="8" rx="1.5" fill="#e0e0e0" stroke="#888" stroke-width="0.8"/><path d="M5 2 H17 L15.5 7 H6.5 Z" fill="#3a5ab0"/></svg>
<div class="t" style="left:726.00px;top:728.21px;font-size:9.2px;color:#222;">VGA 2</div>
<svg style="left:808px;top:720.0px" width="9" height="7" viewBox="0 0 9 7"><path d="M0 7 V3 Q0 0 3 0 H6 Q9 0 9 3 V7 Z" fill="#3a5ab0"/></svg>
<div class="t" style="left:796.50px;top:726.04px;font-size:9.4px;color:#222;">MGMT</div>
<div class="t" style="left:825.00px;top:704.21px;font-size:9.2px;color:#222;">USB 3</div>
<div class="a" style="left:834px;top:714.5px;width:10px;height:5px;background:#1a2a5a"></div>
<div class="a" style="left:834px;top:724.5px;width:10px;height:5px;background:#1a2a5a"></div>
<div class="t" style="left:825.00px;top:729.71px;font-size:9.2px;color:#222;">USB 4</div>
<div class="a" style="left:956.7px;top:674.4px;width:18.2px;height:53.6px;background:#dce8f4;border:1px solid #c8d4e0"></div>
<svg style="left:959.7px;top:681.0px" width="8" height="8" viewBox="0 0 8 8"><path d="M7.5 0.5 V7.5 H3 L0.5 4 L3 0.5 Z" fill="#0a800a" stroke="#102040" stroke-width="0.6"/></svg>
<div class="t" style="left:968.00px;top:680.26px;font-size:9.5px;color:#222;">1</div>
<svg style="left:959.7px;top:693.3px" width="8" height="8" viewBox="0 0 8 8"><path d="M7.5 0.5 V7.5 H3 L0.5 4 L3 0.5 Z" fill="#1a3a90" stroke="#102040" stroke-width="0.6"/></svg>
<div class="t" style="left:968.00px;top:692.56px;font-size:9.5px;color:#222;">2</div>
<svg style="left:959.7px;top:705.6px" width="8" height="8" viewBox="0 0 8 8"><path d="M7.5 0.5 V7.5 H3 L0.5 4 L3 0.5 Z" fill="#1a3a90" stroke="#102040" stroke-width="0.6"/></svg>
<div class="t" style="left:968.00px;top:704.86px;font-size:9.5px;color:#222;">3</div>
<svg style="left:959.7px;top:717.9px" width="8" height="8" viewBox="0 0 8 8"><path d="M7.5 0.5 V7.5 H3 L0.5 4 L3 0.5 Z" fill="#1a3a90" stroke="#102040" stroke-width="0.6"/></svg>
<div class="t" style="left:968.00px;top:717.16px;font-size:9.5px;color:#222;">4</div>
<div class="a" style="left:980.7px;top:674.4px;width:18.2px;height:53.6px;background:#dce8f4;border:1px solid #c8d4e0"></div>
<svg style="left:983.7px;top:681.0px" width="8" height="8" viewBox="0 0 8 8"><path d="M7.5 0.5 V7.5 H3 L0.5 4 L3 0.5 Z" fill="#0a800a" stroke="#102040" stroke-width="0.6"/></svg>
<div class="t" style="left:992.00px;top:680.26px;font-size:9.5px;color:#222;">1</div>
<svg style="left:983.7px;top:693.3px" width="8" height="8" viewBox="0 0 8 8"><path d="M7.5 0.5 V7.5 H3 L0.5 4 L3 0.5 Z" fill="#1a3a90" stroke="#102040" stroke-width="0.6"/></svg>
<div class="t" style="left:992.00px;top:692.56px;font-size:9.5px;color:#222;">2</div>
<svg style="left:983.7px;top:705.6px" width="8" height="8" viewBox="0 0 8 8"><path d="M7.5 0.5 V7.5 H3 L0.5 4 L3 0.5 Z" fill="#1a3a90" stroke="#102040" stroke-width="0.6"/></svg>
<div class="t" style="left:992.00px;top:704.86px;font-size:9.5px;color:#222;">3</div>
<svg style="left:983.7px;top:717.9px" width="8" height="8" viewBox="0 0 8 8"><path d="M7.5 0.5 V7.5 H3 L0.5 4 L3 0.5 Z" fill="#1a3a90" stroke="#102040" stroke-width="0.6"/></svg>
<div class="t" style="left:992.00px;top:717.16px;font-size:9.5px;color:#222;">4</div>
<div class="a" style="left:526px;top:741.0px;width:521px;height:47.0px;background:#fff"></div>
<div class="a" style="left:527px;top:741.5px;width:519px;height:8px;background:#91bbe7"></div>
<div class="a" style="left:527px;top:750.5px;width:519px;height:36.5px;background:linear-gradient(170deg,#f1f3f7 0%,#eceff4 50%,#e4e8ee 100%)"></div>
<div class="t" style="left:1034.00px;top:743.42px;font-size:6px;color:#d0e0f4;">V</div>
<div class="t" style="left:1040.00px;top:743.42px;font-size:6px;color:#b8cce6;">H</div>
<div class="t" style="left:286.50px;width:1000px;text-align:center;top:758.57px;font-size:26.5px;color:#bcc0c6;">Blindpanel</div>
<div class="a" style="left:526px;top:789.5px;width:521px;height:94.5px;background:#fff"></div>
<div class="a" style="left:527px;top:790.5px;width:519px;height:15.7px;background:linear-gradient(#92bbe6 0%,#94b6dc 60%,#8ea6c4 100%)"></div>
<div class="t" style="left:530.30px;top:793.44px;font-size:10.7px;color:#f4f8fc;">FILESRV03</div>
<div class="t" style="left:1017.00px;top:793.69px;font-size:11px;color:#f0f4fa;">V</div>
<div class="t" style="left:1030.50px;top:793.69px;font-size:11px;color:#f0f4fa;">H</div>
<div class="a" style="left:527px;top:806.5px;width:519px;height:76.5px;background:linear-gradient(100deg,#e2e2e2 0%,#d4d4d4 40%,#cbcbcb 100%)"></div>
<div class="a" style="left:551.6px;top:810.9px;width:84.8px;height:71.2px;background:#b4b8c0"></div>
<div class="a" style="left:552.6px;top:811.9px;width:82.8px;height:33.5px;background:linear-gradient(160deg,#e8eef6,#d8e4f2)"></div>
<div class="t" style="left:582.00px;top:820.61px;font-size:9.2px;color:#222;">Power</div>
<svg style="left:612px;top:815.6999999999999px" width="13" height="19" viewBox="0 0 13 19"><path d="M3 0.5 H10.5 Q12.5 0.5 12.5 2.5 V16.5 Q12.5 18.5 10.5 18.5 H3 L0.5 15.5 V3.5 Z" fill="#087808" stroke="#043a04" stroke-width="1"/><rect x="7" y="3.5" width="2.6" height="1.6" fill="#444"/><rect x="3.5" y="8.7" width="2.6" height="1.6" fill="#444"/><rect x="7" y="13.8" width="2.6" height="1.6" fill="#444"/></svg>
<div class="a" style="left:552.6px;top:847.1px;width:82.8px;height:33.99999999999999px;background:linear-gradient(160deg,#e8eef6,#d8e4f2)"></div>
<div class="t" style="left:582.00px;top:855.81px;font-size:9.2px;color:#222;">Power</div>
<svg style="left:612px;top:850.9px" width="13" height="19" viewBox="0 0 13 19"><path d="M3 0.5 H10.5 Q12.5 0.5 12.5 2.5 V16.5 Q12.5 18.5 10.5 18.5 H3 L0.5 15.5 V3.5 Z" fill="#087808" stroke="#043a04" stroke-width="1"/><rect x="7" y="3.5" width="2.6" height="1.6" fill="#444"/><rect x="3.5" y="8.7" width="2.6" height="1.6" fill="#444"/><rect x="7" y="13.8" width="2.6" height="1.6" fill="#444"/></svg>
<div class="a" style="left:647.3px;top:819.5px;width:18.2px;height:54.3px;background:linear-gradient(#f0f0f0,#e8e8e8);border:1px solid #d0d0d0"></div>
<div class="a" style="left:695.3px;top:811.1px;width:117.70000000000005px;height:14.600000000000001px;background:#ececec;border:1px solid #d2d2d2;border-bottom-color:#c8c8c8;border-right-color:#c8c8c8"></div>
<div class="t" style="left:254.15px;width:1000px;text-align:center;top:814.98px;font-size:9px;color:#c4c4c4;">PCI 7</div>
<div class="a" style="left:695.3px;top:828.7px;width:117.70000000000005px;height:13.799999999999997px;background:#ececec;border:1px solid #d2d2d2;border-bottom-color:#c8c8c8;border-right-color:#c8c8c8"></div>
<div class="t" style="left:254.15px;width:1000px;text-align:center;top:832.58px;font-size:9px;color:#c4c4c4;">PCI 6</div>
<div class="a" style="left:716.4px;top:847.2px;width:68.80000000000007px;height:14.099999999999994px;background:#ececec;border:1px solid #d2d2d2;border-bottom-color:#c8c8c8;border-right-color:#c8c8c8"></div>
<div class="t" style="left:250.80px;width:1000px;text-align:center;top:851.08px;font-size:9px;color:#c4c4c4;">PCI 5</div>
<div class="a" style="left:820.7px;top:811.1px;width:117.59999999999991px;height:14.600000000000001px;background:#ececec;border:1px solid #d2d2d2;border-bottom-color:#c8c8c8;border-right-color:#c8c8c8"></div>
<div class="t" style="left:379.50px;width:1000px;text-align:center;top:814.98px;font-size:9px;color:#c4c4c4;">PCI 4</div>
<div class="a" style="left:820.7px;top:828.7px;width:117.59999999999991px;height:13.799999999999997px;background:#ececec;border:1px solid #d2d2d2;border-bottom-color:#c8c8c8;border-right-color:#c8c8c8"></div>
<div class="t" style="left:379.50px;width:1000px;text-align:center;top:832.58px;font-size:9px;color:#c4c4c4;">PCI 3</div>
<div class="a" style="left:859px;top:861.1px;width:73.6px;height:11.4px;background:#e8e8e8;border:1px solid #dadada"></div>
<div class="t" style="left:395.80px;width:1000px;text-align:center;top:863.23px;font-size:8px;color:#c8c8c8;">DinamicLOM</div>
<svg style="left:685px;top:864.5px" width="22" height="9" viewBox="0 0 22 9"><rect x="0.5" y="0.5" width="21" height="8" rx="1.5" fill="#e0e0e0" stroke="#888" stroke-width="0.8"/><path d="M5 2 H17 L15.5 7 H6.5 Z" fill="#3a5ab0"/></svg>
<div class="t" style="left:684.50px;top:873.71px;font-size:9.2px;color:#222;">COM</div>
<svg style="left:729.5px;top:864.5px" width="22" height="9" viewBox="0 0 22 9"><rect x="0.5" y="0.5" width="21" height="8" rx="1.5" fill="#e0e0e0" stroke="#888" stroke-width="0.8"/><path d="M5 2 H17 L15.5 7 H6.5 Z" fill="#3a5ab0"/></svg>
<div class="t" style="left:726.00px;top:873.71px;font-size:9.2px;color:#222;">VGA 2</div>
<svg style="left:808px;top:865.5px" width="9" height="7" viewBox="0 0 9 7"><path d="M0 7 V3 Q0 0 3 0 H6 Q9 0 9 3 V7 Z" fill="#3a5ab0"/></svg>
<div class="t" style="left:796.50px;top:871.54px;font-size:9.4px;color:#222;">MGMT</div>
<div class="t" style="left:825.00px;top:849.71px;font-size:9.2px;color:#222;">USB 3</div>
<div class="a" style="left:834px;top:860.0px;width:10px;height:5px;background:#1a2a5a"></div>
<div class="a" style="left:834px;top:870.0px;width:10px;height:5px;background:#1a2a5a"></div>
<div class="t" style="left:825.00px;top:875.21px;font-size:9.2px;color:#222;">USB 4</div>
<div class="a" style="left:956.7px;top:819.9px;width:18.2px;height:53.6px;background:#dce8f4;border:1px solid #c8d4e0"></div>
<svg style="left:959.7px;top:826.5px" width="8" height="8" viewBox="0 0 8 8"><path d="M7.5 0.5 V7.5 H3 L0.5 4 L3 0.5 Z" fill="#0a800a" stroke="#102040" stroke-width="0.6"/></svg>
<div class="t" style="left:968.00px;top:825.76px;font-size:9.5px;color:#222;">1</div>
<svg style="left:959.7px;top:838.8px" width="8" height="8" viewBox="0 0 8 8"><path d="M7.5 0.5 V7.5 H3 L0.5 4 L3 0.5 Z" fill="#1a3a90" stroke="#102040" stroke-width="0.6"/></svg>
<div class="t" style="left:968.00px;top:838.06px;font-size:9.5px;color:#222;">2</div>
<svg style="left:959.7px;top:851.1px" width="8" height="8" viewBox="0 0 8 8"><path d="M7.5 0.5 V7.5 H3 L0.5 4 L3 0.5 Z" fill="#1a3a90" stroke="#102040" stroke-width="0.6"/></svg>
<div class="t" style="left:968.00px;top:850.36px;font-size:9.5px;color:#222;">3</div>
<svg style="left:959.7px;top:863.4px" width="8" height="8" viewBox="0 0 8 8"><path d="M7.5 0.5 V7.5 H3 L0.5 4 L3 0.5 Z" fill="#1a3a90" stroke="#102040" stroke-width="0.6"/></svg>
<div class="t" style="left:968.00px;top:862.66px;font-size:9.5px;color:#222;">4</div>
<div class="a" style="left:980.7px;top:819.9px;width:18.2px;height:53.6px;background:#dce8f4;border:1px solid #c8d4e0"></div>
<svg style="left:983.7px;top:826.5px" width="8" height="8" viewBox="0 0 8 8"><path d="M7.5 0.5 V7.5 H3 L0.5 4 L3 0.5 Z" fill="#0a800a" stroke="#102040" stroke-width="0.6"/></svg>
<div class="t" style="left:992.00px;top:825.76px;font-size:9.5px;color:#222;">1</div>
<svg style="left:983.7px;top:838.8px" width="8" height="8" viewBox="0 0 8 8"><path d="M7.5 0.5 V7.5 H3 L0.5 4 L3 0.5 Z" fill="#1a3a90" stroke="#102040" stroke-width="0.6"/></svg>
<div class="t" style="left:992.00px;top:838.06px;font-size:9.5px;color:#222;">2</div>
<svg style="left:983.7px;top:851.1px" width="8" height="8" viewBox="0 0 8 8"><path d="M7.5 0.5 V7.5 H3 L0.5 4 L3 0.5 Z" fill="#1a3a90" stroke="#102040" stroke-width="0.6"/></svg>
<div class="t" style="left:992.00px;top:850.36px;font-size:9.5px;color:#222;">3</div>
<svg style="left:983.7px;top:863.4px" width="8" height="8" viewBox="0 0 8 8"><path d="M7.5 0.5 V7.5 H3 L0.5 4 L3 0.5 Z" fill="#1a3a90" stroke="#102040" stroke-width="0.6"/></svg>
<div class="t" style="left:992.00px;top:862.66px;font-size:9.5px;color:#222;">4</div>
<div class="a" style="left:526px;top:886.5px;width:521px;height:94.5px;background:#fff"></div>
<div class="a" style="left:527px;top:887.5px;width:519px;height:15.7px;background:linear-gradient(#92bbe6 0%,#94b6dc 60%,#8ea6c4 100%)"></div>
<div class="t" style="left:530.30px;top:890.44px;font-size:10.7px;color:#f4f8fc;">FILESRV04</div>
<div class="t" style="left:1017.00px;top:890.69px;font-size:11px;color:#f0f4fa;">V</div>
<div class="t" style="left:1030.50px;top:890.69px;font-size:11px;color:#f0f4fa;">H</div>
<div class="a" style="left:527px;top:903.5px;width:519px;height:76.5px;background:linear-gradient(100deg,#e2e2e2 0%,#d4d4d4 40%,#cbcbcb 100%)"></div>
<div class="a" style="left:551.6px;top:907.9px;width:84.8px;height:71.2px;background:#b4b8c0"></div>
<div class="a" style="left:552.6px;top:908.9px;width:82.8px;height:33.5px;background:linear-gradient(160deg,#e8eef6,#d8e4f2)"></div>
<div class="t" style="left:582.00px;top:917.61px;font-size:9.2px;color:#222;">Power</div>
<svg style="left:612px;top:912.6999999999999px" width="13" height="19" viewBox="0 0 13 19"><path d="M3 0.5 H10.5 Q12.5 0.5 12.5 2.5 V16.5 Q12.5 18.5 10.5 18.5 H3 L0.5 15.5 V3.5 Z" fill="#087808" stroke="#043a04" stroke-width="1"/><rect x="7" y="3.5" width="2.6" height="1.6" fill="#444"/><rect x="3.5" y="8.7" width="2.6" height="1.6" fill="#444"/><rect x="7" y="13.8" width="2.6" height="1.6" fill="#444"/></svg>
<div class="a" style="left:552.6px;top:944.1px;width:82.8px;height:33.99999999999999px;background:linear-gradient(160deg,#e8eef6,#d8e4f2)"></div>
<div class="t" style="left:582.00px;top:952.81px;font-size:9.2px;color:#222;">Power</div>
<svg style="left:612px;top:947.9px" width="13" height="19" viewBox="0 0 13 19"><path d="M3 0.5 H10.5 Q12.5 0.5 12.5 2.5 V16.5 Q12.5 18.5 10.5 18.5 H3 L0.5 15.5 V3.5 Z" fill="#087808" stroke="#043a04" stroke-width="1"/><rect x="7" y="3.5" width="2.6" height="1.6" fill="#444"/><rect x="3.5" y="8.7" width="2.6" height="1.6" fill="#444"/><rect x="7" y="13.8" width="2.6" height="1.6" fill="#444"/></svg>
<div class="a" style="left:647.3px;top:916.5px;width:18.2px;height:54.3px;background:linear-gradient(#f0f0f0,#e8e8e8);border:1px solid #d0d0d0"></div>
<div class="a" style="left:695.3px;top:908.1px;width:117.70000000000005px;height:14.600000000000001px;background:#ececec;border:1px solid #d2d2d2;border-bottom-color:#c8c8c8;border-right-color:#c8c8c8"></div>
<div class="t" style="left:254.15px;width:1000px;text-align:center;top:911.98px;font-size:9px;color:#c4c4c4;">PCI 7</div>
<div class="a" style="left:695.3px;top:925.7px;width:117.70000000000005px;height:13.799999999999997px;background:#ececec;border:1px solid #d2d2d2;border-bottom-color:#c8c8c8;border-right-color:#c8c8c8"></div>
<div class="t" style="left:254.15px;width:1000px;text-align:center;top:929.58px;font-size:9px;color:#c4c4c4;">PCI 6</div>
<div class="a" style="left:716.4px;top:944.2px;width:68.80000000000007px;height:14.099999999999994px;background:#ececec;border:1px solid #d2d2d2;border-bottom-color:#c8c8c8;border-right-color:#c8c8c8"></div>
<div class="t" style="left:250.80px;width:1000px;text-align:center;top:948.08px;font-size:9px;color:#c4c4c4;">PCI 5</div>
<div class="a" style="left:820.7px;top:908.1px;width:117.59999999999991px;height:14.600000000000001px;background:#ececec;border:1px solid #d2d2d2;border-bottom-color:#c8c8c8;border-right-color:#c8c8c8"></div>
<div class="t" style="left:379.50px;width:1000px;text-align:center;top:911.98px;font-size:9px;color:#c4c4c4;">PCI 4</div>
<div class="a" style="left:820.7px;top:925.7px;width:117.59999999999991px;height:13.799999999999997px;background:#ececec;border:1px solid #d2d2d2;border-bottom-color:#c8c8c8;border-right-color:#c8c8c8"></div>
<div class="t" style="left:379.50px;width:1000px;text-align:center;top:929.58px;font-size:9px;color:#c4c4c4;">PCI 3</div>
<div class="a" style="left:859px;top:958.1px;width:73.6px;height:11.4px;background:#e8e8e8;border:1px solid #dadada"></div>
<div class="t" style="left:395.80px;width:1000px;text-align:center;top:960.23px;font-size:8px;color:#c8c8c8;">DinamicLOM</div>
<svg style="left:685px;top:961.5px" width="22" height="9" viewBox="0 0 22 9"><rect x="0.5" y="0.5" width="21" height="8" rx="1.5" fill="#e0e0e0" stroke="#888" stroke-width="0.8"/><path d="M5 2 H17 L15.5 7 H6.5 Z" fill="#3a5ab0"/></svg>
<div class="t" style="left:684.50px;top:970.71px;font-size:9.2px;color:#222;">COM</div>
<svg style="left:729.5px;top:961.5px" width="22" height="9" viewBox="0 0 22 9"><rect x="0.5" y="0.5" width="21" height="8" rx="1.5" fill="#e0e0e0" stroke="#888" stroke-width="0.8"/><path d="M5 2 H17 L15.5 7 H6.5 Z" fill="#3a5ab0"/></svg>
<div class="t" style="left:726.00px;top:970.71px;font-size:9.2px;color:#222;">VGA 2</div>
<svg style="left:808px;top:962.5px" width="9" height="7" viewBox="0 0 9 7"><path d="M0 7 V3 Q0 0 3 0 H6 Q9 0 9 3 V7 Z" fill="#3a5ab0"/></svg>
<div class="t" style="left:796.50px;top:968.54px;font-size:9.4px;color:#222;">MGMT</div>
<div class="t" style="left:825.00px;top:946.71px;font-size:9.2px;color:#222;">USB 3</div>
<div class="a" style="left:834px;top:957.0px;width:10px;height:5px;background:#1a2a5a"></div>
<div class="a" style="left:834px;top:967.0px;width:10px;height:5px;background:#1a2a5a"></div>
<div class="t" style="left:825.00px;top:972.21px;font-size:9.2px;color:#222;">USB 4</div>
<div class="a" style="left:956.7px;top:916.9px;width:18.2px;height:53.6px;background:#dce8f4;border:1px solid #c8d4e0"></div>
<svg style="left:959.7px;top:923.5px" width="8" height="8" viewBox="0 0 8 8"><path d="M7.5 0.5 V7.5 H3 L0.5 4 L3 0.5 Z" fill="#0a800a" stroke="#102040" stroke-width="0.6"/></svg>
<div class="t" style="left:968.00px;top:922.76px;font-size:9.5px;color:#222;">1</div>
<svg style="left:959.7px;top:935.8px" width="8" height="8" viewBox="0 0 8 8"><path d="M7.5 0.5 V7.5 H3 L0.5 4 L3 0.5 Z" fill="#1a3a90" stroke="#102040" stroke-width="0.6"/></svg>
<div class="t" style="left:968.00px;top:935.06px;font-size:9.5px;color:#222;">2</div>
<svg style="left:959.7px;top:948.1px" width="8" height="8" viewBox="0 0 8 8"><path d="M7.5 0.5 V7.5 H3 L0.5 4 L3 0.5 Z" fill="#1a3a90" stroke="#102040" stroke-width="0.6"/></svg>
<div class="t" style="left:968.00px;top:947.36px;font-size:9.5px;color:#222;">3</div>
<svg style="left:959.7px;top:960.4px" width="8" height="8" viewBox="0 0 8 8"><path d="M7.5 0.5 V7.5 H3 L0.5 4 L3 0.5 Z" fill="#1a3a90" stroke="#102040" stroke-width="0.6"/></svg>
<div class="t" style="left:968.00px;top:959.66px;font-size:9.5px;color:#222;">4</div>
<div class="a" style="left:980.7px;top:916.9px;width:18.2px;height:53.6px;background:#dce8f4;border:1px solid #c8d4e0"></div>
<svg style="left:983.7px;top:923.5px" width="8" height="8" viewBox="0 0 8 8"><path d="M7.5 0.5 V7.5 H3 L0.5 4 L3 0.5 Z" fill="#0a800a" stroke="#102040" stroke-width="0.6"/></svg>
<div class="t" style="left:992.00px;top:922.76px;font-size:9.5px;color:#222;">1</div>
<svg style="left:983.7px;top:935.8px" width="8" height="8" viewBox="0 0 8 8"><path d="M7.5 0.5 V7.5 H3 L0.5 4 L3 0.5 Z" fill="#1a3a90" stroke="#102040" stroke-width="0.6"/></svg>
<div class="t" style="left:992.00px;top:935.06px;font-size:9.5px;color:#222;">2</div>
<svg style="left:983.7px;top:948.1px" width="8" height="8" viewBox="0 0 8 8"><path d="M7.5 0.5 V7.5 H3 L0.5 4 L3 0.5 Z" fill="#1a3a90" stroke="#102040" stroke-width="0.6"/></svg>
<div class="t" style="left:992.00px;top:947.36px;font-size:9.5px;color:#222;">3</div>
<svg style="left:983.7px;top:960.4px" width="8" height="8" viewBox="0 0 8 8"><path d="M7.5 0.5 V7.5 H3 L0.5 4 L3 0.5 Z" fill="#1a3a90" stroke="#102040" stroke-width="0.6"/></svg>
<div class="t" style="left:992.00px;top:959.66px;font-size:9.5px;color:#222;">4</div>
<div class="a" style="left:526px;top:983.5px;width:521px;height:14.5px;background:#fff"></div>
<div class="a" style="left:527px;top:984.0px;width:519px;height:8px;background:#91bbe7"></div>
<div class="a" style="left:527px;top:993.0px;width:519px;height:5.0px;background:linear-gradient(170deg,#f1f3f7 0%,#eceff4 50%,#e4e8ee 100%)"></div>
<div class="t" style="left:1034.00px;top:985.92px;font-size:6px;color:#d0e0f4;">V</div>
<div class="t" style="left:1040.00px;top:985.92px;font-size:6px;color:#b8cce6;">H</div>
<svg style="left:0px;top:0px" width="1960" height="1089" viewBox="0 0 1960 1089"><path d="M282 496 Q470 571 681 514" fill="none" stroke="#1a7ae0" stroke-width="1.6"/><path d="M672.5 508.5 L681.4 514 L676 522.5" fill="none" stroke="#1a7ae0" stroke-width="1.8"/></svg>
<div class="a" style="left:689.2px;top:487.3px;width:60.6px;height:23.3px;background:rgba(252,242,206,0.85);border:1px solid #404040"></div>
<div class="t" style="left:692.00px;top:493.00px;font-size:13px;color:#333;">In Betrieb</div>
<div class="t" style="left:1132.60px;top:98.13px;font-size:15.8px;color:#262626;letter-spacing:0.193px;">Gewicht:</div>
<div class="a" style="left:1292.6px;top:93.7px;width:112px;height:23.4px;background:#c9e27a;border-radius:3px"></div>
<div class="t" style="left:1296.80px;top:100.71px;font-size:11.8px;color:#1e1e1e;letter-spacing:0.376px;">488.3 (1000) [kg]</div>
<div class="t" style="left:1132.60px;top:122.13px;font-size:15.8px;color:#262626;letter-spacing:0.318px;">Leistungsaufnahme:</div>
<div class="a" style="left:1292.6px;top:118px;width:87.4px;height:23.4px;background:#74b874;border-radius:3px"></div>
<div class="t" style="left:1296.80px;top:124.71px;font-size:11.8px;color:#1e1e1e;letter-spacing:0.344px;">22.1 (0) [kW]</div>
<div class="t" style="left:1132.60px;top:146.23px;font-size:15.8px;color:#262626;letter-spacing:0.391px;">Verlustleistung:</div>
<div class="a" style="left:1292.6px;top:142px;width:135.4px;height:23.4px;background:#74b874;border-radius:3px"></div>
<div class="t" style="left:1296.80px;top:148.81px;font-size:11.8px;color:#1e1e1e;letter-spacing:0.316px;">180648.4 (0) [BTU/h]</div>
<div class="t" style="left:1132.60px;top:170.33px;font-size:15.8px;color:#262626;letter-spacing:0.272px;">Belegung:</div>
<div class="a" style="left:1292.6px;top:166.5px;width:53.4px;height:23.4px;background:#d9ec74;border-radius:3px"></div>
<div class="t" style="left:1296.80px;top:172.91px;font-size:11.8px;color:#1e1e1e;letter-spacing:0.128px;">59.6 %</div>
<div class="t" style="left:1132.60px;top:259.63px;font-size:15.8px;color:#262626;letter-spacing:0.142px;">Lüfter-RZ-B1</div>
<div class="a" style="left:1234.5px;top:255.5px;width:68.5px;height:23.5px;background:#a9d5a9;border-radius:3px"></div>
<div class="t" style="left:1239.00px;top:262.34px;font-size:12px;color:#222;letter-spacing:0.302px;">In Betrieb</div>
<div class="t" style="left:1132.60px;top:308.13px;font-size:15.8px;color:#262626;letter-spacing:-0.519px;">PFL-46</div>
<div class="t" style="left:1132.60px;top:331.35px;font-size:14px;color:#6c6c6c;letter-spacing:0.065px;">Schrankanbindung RZ | Keller |</div>
<div class="t" style="left:1132.60px;top:356.53px;font-size:15.8px;color:#262626;letter-spacing:-0.519px;">PFL-45</div>
<div class="t" style="left:1132.60px;top:379.75px;font-size:14px;color:#6c6c6c;letter-spacing:0.065px;">Schrankanbindung RZ | Keller |</div>
<div class="t" style="left:1132.60px;top:453.73px;font-size:15.8px;color:#262626;letter-spacing:-0.689px;">BROCADE01</div>
<div class="a" style="left:1231.4px;top:449.5px;width:113.59999999999991px;height:23.399999999999977px;background:#f5e4e6;border-radius:3px"></div>
<div class="t" style="left:1235.90px;top:456.34px;font-size:12px;color:#222;letter-spacing:-0.008px;">Brocade FOS 8.2</div>
<div class="a" style="left:1349.2px;top:449.5px;width:68.89999999999986px;height:23.399999999999977px;background:#a9d5a9;border-radius:3px"></div>
<div class="t" style="left:1353.70px;top:456.34px;font-size:12px;color:#222;letter-spacing:0.263px;">In Betrieb</div>
<div class="t" style="left:1132.60px;top:476.85px;font-size:14px;color:#6c6c6c;letter-spacing:0.103px;">Schrankanbindung Backbone</div>
<div class="t" style="left:1132.60px;top:502.13px;font-size:15.8px;color:#262626;letter-spacing:0.302px;">Blindpanel</div>
<div class="a" style="left:1217.6px;top:498.2px;width:70.90000000000009px;height:23.19999999999999px;background:#fde0e2;border-radius:3px"></div>
<div class="t" style="left:1222.10px;top:505.04px;font-size:12px;color:#222;letter-spacing:0.388px;">» Biologie</div>
<div class="t" style="left:1132.60px;top:524.85px;font-size:14px;color:#6c6c6c;letter-spacing:-0.021px;">Freie HE / Staubschutz</div>
<div class="t" style="left:1132.60px;top:550.23px;font-size:15.8px;color:#262626;letter-spacing:-0.993px;">FILESRV01</div>
<div class="a" style="left:1215.7px;top:546.7px;width:68.89999999999986px;height:23.600000000000023px;background:#a9d5a9;border-radius:3px"></div>
<div class="t" style="left:1220.20px;top:553.54px;font-size:12px;color:#222;letter-spacing:0.263px;">In Betrieb</div>
<div class="a" style="left:1288.8px;top:546.7px;width:140.0px;height:23.600000000000023px;background:#e8e8e8;border-radius:3px"></div>
<div class="t" style="left:1293.30px;top:553.54px;font-size:12px;color:#222;letter-spacing:0.263px;">Intel Xeon D 2.90GHz</div>
<div class="a" style="left:1433.2px;top:546.7px;width:78.20000000000005px;height:23.600000000000023px;background:#d6d6d6;border-radius:3px"></div>
<div class="t" style="left:1437.70px;top:553.54px;font-size:12px;color:#222;letter-spacing:0.039px;">RAM 16GB</div>
<div class="a" style="left:1516.1px;top:546.7px;width:121.40000000000009px;height:23.600000000000023px;background:#f7e5e8;border-radius:3px"></div>
<div class="t" style="left:1520.60px;top:553.54px;font-size:12px;color:#222;letter-spacing:0.372px;">Windows Srv 2016</div>
<div class="t" style="left:1132.60px;top:572.85px;font-size:14px;color:#6c6c6c;letter-spacing:-0.203px;">File Server / Fujitsu PRIMERGY RX4770 M4</div>
<div class="t" style="left:1132.60px;top:648.03px;font-size:15.8px;color:#262626;letter-spacing:-0.993px;">FILESRV02</div>
<div class="a" style="left:1215.7px;top:643.4px;width:68.89999999999986px;height:23.600000000000023px;background:#a9d5a9;border-radius:3px"></div>
<div class="t" style="left:1220.20px;top:650.24px;font-size:12px;color:#222;letter-spacing:0.263px;">In Betrieb</div>
<div class="a" style="left:1288.8px;top:643.4px;width:140.0px;height:23.600000000000023px;background:#e8e8e8;border-radius:3px"></div>
<div class="t" style="left:1293.30px;top:650.24px;font-size:12px;color:#222;letter-spacing:0.263px;">Intel Xeon D 2.90GHz</div>
<div class="a" style="left:1433.2px;top:643.4px;width:78.20000000000005px;height:23.600000000000023px;background:#d6d6d6;border-radius:3px"></div>
<div class="t" style="left:1437.70px;top:650.24px;font-size:12px;color:#222;letter-spacing:0.039px;">RAM 16GB</div>
<div class="a" style="left:1516.1px;top:643.4px;width:121.40000000000009px;height:23.600000000000023px;background:#f7e5e8;border-radius:3px"></div>
<div class="t" style="left:1520.60px;top:650.24px;font-size:12px;color:#222;letter-spacing:0.372px;">Windows Srv 2016</div>
<div class="t" style="left:1132.60px;top:670.65px;font-size:14px;color:#6c6c6c;letter-spacing:-0.203px;">File Server / Fujitsu PRIMERGY RX4770 M4</div>
<div class="t" style="left:1132.60px;top:744.63px;font-size:15.8px;color:#262626;letter-spacing:0.302px;">Blindpanel</div>
<div class="a" style="left:1217.3px;top:740.7px;width:157.9000000000001px;height:23.5px;background:#e8fcfc;border-radius:3px"></div>
<div class="t" style="left:1221.80px;top:747.54px;font-size:12px;color:#222;letter-spacing:0.185px;">» Geisteswissenschaften</div>
<div class="t" style="left:1132.60px;top:767.45px;font-size:14px;color:#6c6c6c;letter-spacing:-0.021px;">Freie HE / Staubschutz</div>
<div class="t" style="left:1132.60px;top:793.93px;font-size:15.8px;color:#262626;letter-spacing:-0.993px;">FILESRV03</div>
<div class="a" style="left:1215.7px;top:789.2px;width:68.89999999999986px;height:23.600000000000023px;background:#a9d5a9;border-radius:3px"></div>
<div class="t" style="left:1220.20px;top:796.04px;font-size:12px;color:#222;letter-spacing:0.263px;">In Betrieb</div>
<div class="a" style="left:1288.8px;top:789.2px;width:140.0px;height:23.600000000000023px;background:#e8e8e8;border-radius:3px"></div>
<div class="t" style="left:1293.30px;top:796.04px;font-size:12px;color:#222;letter-spacing:0.263px;">Intel Xeon D 2.30GHz</div>
<div class="a" style="left:1433.2px;top:789.2px;width:78.20000000000005px;height:23.600000000000023px;background:#d6d6d6;border-radius:3px"></div>
<div class="t" style="left:1437.70px;top:796.04px;font-size:12px;color:#222;letter-spacing:0.039px;">RAM 16GB</div>
<div class="a" style="left:1516.1px;top:789.2px;width:121.40000000000009px;height:23.600000000000023px;background:#f7e5e8;border-radius:3px"></div>
<div class="t" style="left:1520.60px;top:796.04px;font-size:12px;color:#222;letter-spacing:0.372px;">Windows Srv 2016</div>
<div class="t" style="left:1132.60px;top:816.55px;font-size:14px;color:#6c6c6c;letter-spacing:-0.203px;">File Server / Fujitsu PRIMERGY RX4770 M4</div>
<div class="t" style="left:1132.60px;top:890.53px;font-size:15.8px;color:#262626;letter-spacing:-0.993px;">FILESRV04</div>
<div class="a" style="left:1215.7px;top:885.8px;width:68.89999999999986px;height:23.600000000000023px;background:#a9d5a9;border-radius:3px"></div>
<div class="t" style="left:1220.20px;top:892.64px;font-size:12px;color:#222;letter-spacing:0.263px;">In Betrieb</div>
<div class="a" style="left:1288.8px;top:885.8px;width:140.0px;height:23.600000000000023px;background:#e8e8e8;border-radius:3px"></div>
<div class="t" style="left:1293.30px;top:892.64px;font-size:12px;color:#222;letter-spacing:0.263px;">Intel Xeon D 2.30GHz</div>
<div class="a" style="left:1433.2px;top:885.8px;width:78.20000000000005px;height:23.600000000000023px;background:#d6d6d6;border-radius:3px"></div>
<div class="t" style="left:1437.70px;top:892.64px;font-size:12px;color:#222;letter-spacing:0.039px;">RAM 16GB</div>
<div class="a" style="left:1516.1px;top:885.8px;width:121.40000000000009px;height:23.600000000000023px;background:#f7e5e8;border-radius:3px"></div>
<div class="t" style="left:1520.60px;top:892.64px;font-size:12px;color:#222;letter-spacing:0.372px;">Windows Srv 2016</div>
<div class="t" style="left:1132.60px;top:913.15px;font-size:14px;color:#6c6c6c;letter-spacing:-0.203px;">File Server / Fujitsu PRIMERGY RX4770 M4</div>
<div class="t" style="left:1132.60px;top:986.03px;font-size:15.8px;color:#262626;letter-spacing:0.302px;">Blindpanel</div>
<div class="a" style="left:1217.6px;top:982.8px;width:68.70000000000005px;height:23.200000000000045px;background:#fde2fd;border-radius:3px"></div>
<div class="t" style="left:1222.10px;top:989.64px;font-size:12px;color:#222;letter-spacing:0.405px;">» Medizin</div>
<div class="a" style="left:1900px;top:107.7px;width:8px;height:311px;background:#b4b4b4"></div>
<svg style="left:1858px;top:836px" width="32" height="32" viewBox="0 0 32 32"><circle cx="13.3" cy="12.6" r="9.2" fill="none" stroke="#b0b0b0" stroke-width="3"/><path d="M13.3 8 V17.2 M8.7 12.6 H17.9" stroke="#b0b0b0" stroke-width="1.5"/><path d="M21.3 20.6 L28.5 27.6" stroke="#b0b0b0" stroke-width="3.6"/></svg>
<svg style="left:1858px;top:871px" width="32" height="32" viewBox="0 0 32 32"><circle cx="13.3" cy="12.3" r="9.2" fill="none" stroke="#b0b0b0" stroke-width="3"/><path d="M8.7 12.3 H17.9" stroke="#b0b0b0" stroke-width="1.5"/><path d="M21.3 20.3 L28.5 27.3" stroke="#b0b0b0" stroke-width="3.6"/></svg>
<svg style="left:1860px;top:908px" width="28" height="27" viewBox="0 0 28 27"><path d="M3 9.5 V2.5 H10 M18 2.5 H25 V9.5 M25 17 V24 H18 M10 24 H3 V17" fill="none" stroke="#b0b0b0" stroke-width="2.4"/></svg>
<svg style="left:1859px;top:941px" width="30" height="30" viewBox="0 0 30 30"><rect x="4" y="4" width="21" height="21" fill="none" stroke="#b0b0b0" stroke-width="1.6"/><rect x="2" y="2" width="4.5" height="4.5" fill="#fff" stroke="#b0b0b0" stroke-width="1.4"/><rect x="22.5" y="2" width="4.5" height="4.5" fill="#fff" stroke="#b0b0b0" stroke-width="1.4"/><rect x="2" y="22.5" width="4.5" height="4.5" fill="#fff" stroke="#b0b0b0" stroke-width="1.4"/><rect x="22.5" y="22.5" width="4.5" height="4.5" fill="#fff" stroke="#b0b0b0" stroke-width="1.4"/><path d="M9.5 21 L14.5 8.5 L19.5 21 M11.3 16.8 H17.7" fill="none" stroke="#b0b0b0" stroke-width="1.5"/></svg>
<div class="a" style="left:44px;top:998px;width:1872px;height:44px;background:#333"></div>
<div class="a" style="left:0px;top:1042px;width:1960px;height:47px;background:#f4f5f9"></div>
<svg style="left:1368px;top:1005px" width="8" height="30" viewBox="0 0 8 30"><path d="M6.5 1 H2 V28.5 H6.5" fill="none" stroke="#9a9a9a" stroke-width="2"/></svg>
<svg style="left:1510px;top:1005px" width="8" height="30" viewBox="0 0 8 30"><path d="M1 1 H5.5 V28.5 H1" fill="none" stroke="#9a9a9a" stroke-width="2"/></svg>
<svg style="left:1383px;top:1004px" width="32" height="31" viewBox="0 0 32 31"><path d="M1.5 10 V28.5 H30 V10" fill="none" stroke="#9a9a9a" stroke-width="1.4"/><path d="M15.7 1 V22 M9 15.5 L15.7 22 L22.4 15.5" fill="none" stroke="#9a9a9a" stroke-width="1.4"/></svg>
<div class="t" style="left:1423.10px;top:1013.39px;font-size:13.6px;color:#b4b4b4;letter-spacing:-0.258px;">Hier ablegen</div>
<div class="t" style="left:1536.10px;top:1005.16px;font-size:10.8px;color:#c8c8c8;letter-spacing:0.178px;">Lizenziert: tripunkt GmbH (Christin)</div>
<div class="t" style="left:1536.10px;top:1023.86px;font-size:10.8px;color:#c8c8c8;letter-spacing:0.253px;">Datenbank: localhost\pathfinder [SQLite]</div>
<div class="t" style="left:1759.30px;top:1005.16px;font-size:10.8px;color:#c8c8c8;letter-spacing:0.232px;">© 2001-2023 tripunkt GmbH</div>
<div class="t" style="left:1759.30px;top:1023.86px;font-size:10.8px;color:#c8c8c8;letter-spacing:-0.223px;">v3.9.0.326 (64 Bit)</div>
</body></html>
